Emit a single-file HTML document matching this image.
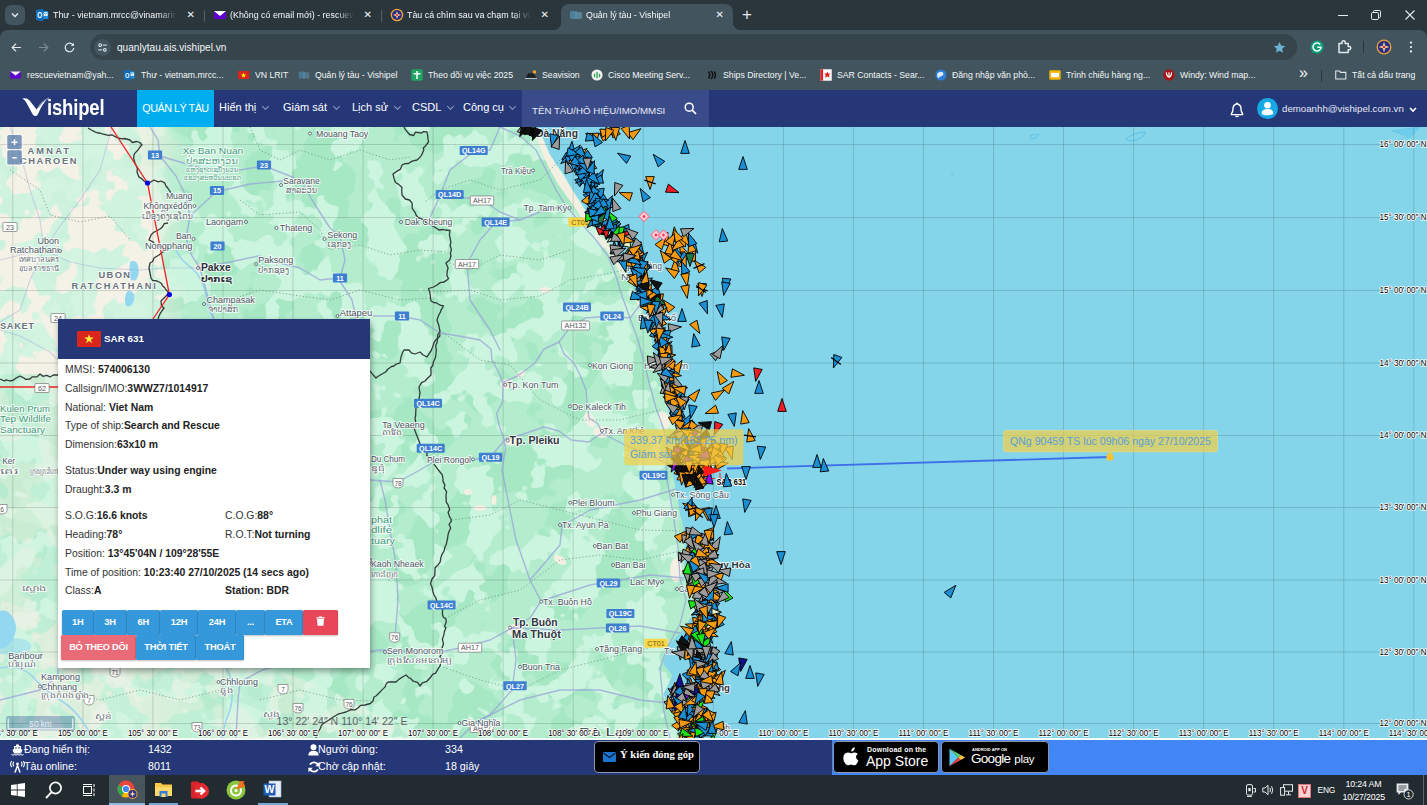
<!DOCTYPE html>
<html lang="vi"><head><meta charset="utf-8"><title>Quản lý tàu - Vishipel</title>
<style>
html,body{margin:0;padding:0;background:#2b363c;}
body{width:1427px;height:805px;overflow:hidden;font-family:"Liberation Sans","DejaVu Sans",sans-serif;}
#root{position:relative;width:1427px;height:805px;overflow:hidden;background:#2b363c;}
.abs{position:absolute;}
#tabstrip{position:absolute;left:0;top:0;width:1427px;height:30px;background:#2b363c;}
#toolbar{position:absolute;left:0;top:30px;width:1427px;height:60px;background:#42545e;}
#nav{position:absolute;left:0;top:90px;width:1427px;height:37px;background:#253777;}
#map{position:absolute;left:0;top:127px;width:1427px;height:611px;overflow:hidden;background:#84d5ea;}
#map svg{position:absolute;left:0;top:0;}
#status{position:absolute;left:0;top:738px;width:1427px;height:37px;background:#253777;}
#taskbar{position:absolute;left:0;top:775px;width:1427px;height:30px;background:#222b30;}
.tsbtn{position:absolute;left:5px;top:5px;width:20px;height:20px;border-radius:6px;background:#42545e;display:flex;align-items:center;justify-content:center;}
.tab{position:absolute;top:4px;height:26px;color:#f4f7f8;font-size:8.9px;white-space:nowrap;}
.tab .fav{position:absolute;left:8px;top:4px;width:14px;height:14px;}
.tab .tt{position:absolute;left:25px;top:6px;overflow:hidden;white-space:nowrap;-webkit-mask-image:linear-gradient(90deg,#000 85%,transparent);mask-image:linear-gradient(90deg,#000 85%,transparent);}
.tab .tx{position:absolute;right:9px;top:5px;font-size:10px;}
.tab.active{background:#42545e;border-radius:8px 8px 0 0;}
.tab.active:before,.tab.active:after{content:"";position:absolute;bottom:0;width:8px;height:8px;background:radial-gradient(circle at 0 0,transparent 8px,#42545e 8.5px);left:-8px;}
.tab.active:after{left:auto;right:-8px;background:radial-gradient(circle at 100% 0,transparent 8px,#42545e 8.5px);}
.tsep{position:absolute;top:10px;width:1px;height:12px;background:#51626b;}
.newtab{position:absolute;left:741px;top:4px;color:#e3e9ec;font-size:17px;line-height:20px;}
.wctl{position:absolute;top:10px;width:10px;height:10px;}
.tbround{position:absolute;left:0;top:0;width:1427px;height:8px;background:#2b363c;}
.tbround:after{content:"";position:absolute;left:0;top:0;width:1427px;height:16px;background:#42545e;border-radius:8px 8px 0 0;}
.omni{position:absolute;left:90px;top:4px;width:1207px;height:26px;border-radius:13px;background:#36444c;}
.omni .site{position:absolute;left:3.5px;top:4.5px;width:17px;height:17px;border-radius:9px;background:#42545e;display:flex;align-items:center;justify-content:center;}
.omni .url{position:absolute;left:27px;top:7.8px;color:#f4f7f8;font-size:10.1px;}
#bookmarks{position:absolute;left:0;top:32px;width:1427px;height:28px;}
.bm{position:absolute;top:3.5px;height:18px;color:#f4f7f8;font-size:8.7px;white-space:nowrap;display:flex;align-items:center;}
.bm svg{flex:none;transform:scale(.88);}
.bm b{font-weight:normal;margin-left:4px;}
.bmmore{position:absolute;left:1299px;top:2px;color:#f0f4f5;font-size:16px;}
#nav{color:#fff;font-size:13px;}
.logo{position:absolute;left:22px;top:8px;width:90px;height:24px;}
.logo span{position:absolute;left:25.2px;top:-2px;font-size:21.5px;line-height:25px;font-weight:bold;color:#fff;transform:scaleX(.86);transform-origin:0 0;white-space:nowrap;letter-spacing:-.2px;}
.navact{position:absolute;left:137px;top:0;width:77px;height:37px;background:#00aeef;line-height:36px;text-align:center;font-size:10.8px;letter-spacing:-.5px;white-space:nowrap;}
.navi{position:absolute;top:0;height:37px;line-height:34px;font-size:11px;white-space:nowrap;}
.navi i{display:inline-block;width:4px;height:4px;border-right:1.6px solid #8f9bc6;border-bottom:1.6px solid #8f9bc6;transform:rotate(45deg);margin-left:6.5px;position:relative;top:-2px;}
.search{position:absolute;left:522px;top:0;width:187px;height:37px;background:#3a4b8a;}
.search span{position:absolute;left:10px;top:14.5px;font-size:9.7px;color:#e8ebf5;white-space:nowrap;}
.search svg{position:absolute;left:162px;top:12px;}
.avatar{position:absolute;left:1257px;top:8px;width:21px;height:21px;}
.email{position:absolute;left:1282px;top:13px;font-size:9.7px;color:#e6e9f3;white-space:nowrap;}
#popup{position:absolute;left:58px;top:319px;width:312px;height:349px;background:#fff;box-shadow:1px 3px 6px rgba(0,0,0,.38);font-size:10.4px;color:#333;}
#popup .ph{position:absolute;left:0;top:0;width:312px;height:40px;background:#253777;color:#fff;}
#popup .ph .flag{position:absolute;left:19px;top:12px;}
#popup .ph b{position:absolute;left:46px;top:14px;font-size:9.9px;}
#popup .r{position:absolute;left:7px;white-space:nowrap;height:16px;line-height:16px;}
#popup .r.c2{left:167px;}
#popup .r b{color:#222;}
#popup .btn{position:absolute;height:25px;line-height:25px;text-align:center;background:#3498db;color:#fff;font-weight:bold;font-size:9.3px;letter-spacing:-.25px;white-space:nowrap;box-shadow:0 1px 2px rgba(0,0,0,.25), inset -1px 0 0 rgba(0,0,0,.06);border-radius:1.5px;}
#popup .btn.red{background:#e8475a;}
#popup .btn.pink{background:#ea6b78;}
#popup .btn svg{position:relative;top:1px;}
#status{color:#fff;}
#status .wline{position:absolute;left:0;top:0;width:1427px;height:1.6px;background:#f4f9fa;}
#status .lightblue{position:absolute;left:832px;top:2px;width:595px;height:35px;background:#4285f4;}
#status .sl{position:absolute;font-size:10.7px;white-space:nowrap;line-height:16px;}
.fb{position:absolute;left:594px;top:3px;width:104px;height:30px;background:#000;border:1px solid #8c94a8;border-radius:4px;box-sizing:content-box;}
.fb svg{position:absolute;left:8px;top:10px;}
.fb span{position:absolute;left:25px;top:7px;font-family:"Liberation Serif","DejaVu Serif",serif;font-weight:bold;font-size:10.6px;color:#fff;white-space:nowrap;}
.badge{position:absolute;top:3px;height:30px;background:#000;border:1px solid #8c94a8;border-radius:4px;}
.badge .b1{position:absolute;left:33px;top:4px;font-size:7px;font-weight:bold;color:#fff;white-space:nowrap;letter-spacing:.2px;}
.badge .b2{position:absolute;left:32px;top:11px;font-size:14px;color:#fff;white-space:nowrap;}
.badge .g1{position:absolute;left:30px;top:5px;font-size:4px;font-weight:bold;color:#fff;white-space:nowrap;}
.badge .g2{position:absolute;left:29px;top:9px;font-size:13.5px;color:#fff;white-space:nowrap;letter-spacing:-.7px;}
.badge .g2 em{font-style:normal;font-size:11.5px;margin-left:4px;letter-spacing:-.3px;}
.tkact{position:absolute;left:109px;top:0;width:36px;height:30px;background:#48555c;}
.tkul{position:absolute;top:28px;height:2px;background:#76a9d8;}
.tkt{position:absolute;color:#fff;font-size:8.9px;white-space:nowrap;letter-spacing:-.2px;}
.wctl svg{display:block;}
.newtab{left:742px !important;top:5px !important;}

</style></head><body>
<div id="root">
<div id="tabstrip">
  <div class="tsbtn"><svg width="10" height="10" viewBox="0 0 10 10"><path d="M2 3.5 L5 6.5 L8 3.5" fill="none" stroke="#e3e9ec" stroke-width="1.4"/></svg></div>
  <div class="tab" style="left:28px;width:176px;"><span class="fav"><svg width="14" height="14" viewBox="0 0 14 14"><rect x="6" y="3" width="6.2" height="8" fill="#1a8fe0"/><path d="M7.4 4.2 H11.6 V7.8 H7.4 Z" fill="#fff"/><path d="M7.4 4.4 L9.5 6.2 L11.6 4.4" fill="none" stroke="#1a8fe0" stroke-width=".8"/><path d="M0 2 L7.4 0.8 V13.2 L0 12 Z" fill="#0f6cbd"/><text x="3.7" y="10.2" font-size="8.5" font-weight="bold" fill="#fff" text-anchor="middle" font-family="Liberation Sans, sans-serif" textLength="5" lengthAdjust="spacingAndGlyphs">O</text></svg></span><span class="tt" style="width:124px">Thư - vietnam.mrcc@vinamarine</span><span class="tx">✕</span></div>
  <div class="tsep" style="left:204px"></div>
  <div class="tab" style="left:205px;width:176px;"><span class="fav"><svg width="14" height="14" viewBox="0 0 14 14"><rect x="1" y="3" width="12" height="8" fill="#5f01d1"/><path d="M1 3 L7 8 L13 3 Z" fill="#fff"/></svg></span><span class="tt" style="width:124px">(Không có email mới) - rescuevietnam</span><span class="tx">✕</span></div>
  <div class="tsep" style="left:381px"></div>
  <div class="tab" style="left:382px;width:176px;"><span class="fav"><svg width="14" height="14" viewBox="0 0 14 14"><circle cx="7" cy="7" r="6.3" fill="#f2a33a"/><circle cx="7" cy="7" r="5" fill="#2a2f86"/><path d="M7 3 L8 6 L11 7 L8 8 L7 11 L6 8 L3 7 L6 6 Z" fill="#f4d9a0"/><circle cx="7" cy="7" r="1" fill="#d22"/></svg></span><span class="tt" style="width:124px">Tàu cá chìm sau va chạm tại vùng</span><span class="tx">✕</span></div>
  <div class="tab active" style="left:561px;width:172px;"><span class="fav"><svg width="14" height="14" viewBox="0 0 14 14"><rect x="1" y="3" width="7" height="8" rx="1" fill="#4d7f9c"/><rect x="6" y="4" width="7" height="7" rx="1" fill="#5d8fa8" opacity=".8"/></svg></span><span class="tt" style="width:120px">Quản lý tàu - Vishipel</span><span class="tx">✕</span></div>
  <div class="newtab">+</div>
  <div class="wctl" style="left:1338px"><svg width="10" height="10"><path d="M0 5.5 H10" stroke="#e3e9ec" stroke-width="1"/></svg></div>
  <div class="wctl" style="left:1371px"><svg width="10" height="10"><rect x="0.5" y="2.5" width="7" height="7" rx="1.2" fill="none" stroke="#e3e9ec"/><path d="M2.5 2.5 V1.5 Q2.5 0.5 3.5 0.5 H8.5 Q9.5 0.5 9.5 1.5 V6.5 Q9.5 7.5 8.5 7.5 H7.5" fill="none" stroke="#e3e9ec"/></svg></div>
  <div class="wctl" style="left:1405px"><svg width="10" height="10"><path d="M0.5 0.5 L9.5 9.5 M9.5 0.5 L0.5 9.5" stroke="#e3e9ec" stroke-width="1.1"/></svg></div>
</div>
<div id="toolbar">
  <div class="tbround"></div>
  <svg class="abs" style="left:10px;top:10.5px" width="13" height="13" viewBox="0 0 16 16"><path d="M13.5 8 H3 M7.5 3.2 L2.7 8 L7.5 12.8" fill="none" stroke="#e3e9ec" stroke-width="1.5"/></svg>
  <svg class="abs" style="left:36.5px;top:10.5px" width="13" height="13" viewBox="0 0 16 16"><path d="M2.5 8 H13 M8.5 3.2 L13.3 8 L8.5 12.8" fill="none" stroke="#7d8c94" stroke-width="1.5"/></svg>
  <svg class="abs" style="left:63px;top:10.5px" width="13" height="13" viewBox="0 0 16 16"><path d="M12.6 5.2 A5.3 5.3 0 1 0 13.3 8.6" fill="none" stroke="#e3e9ec" stroke-width="1.5"/><path d="M13.4 2.2 V6 H9.6 Z" fill="#e3e9ec"/></svg>
  <div class="omni">
    <div class="site"><svg width="11" height="11" viewBox="0 0 14 14"><g stroke="#e3e9ec" stroke-width="1.3" fill="none"><path d="M7.5 4 H12.5"/><circle cx="4" cy="4" r="1.7"/><path d="M1.5 10 H6.5"/><circle cx="10" cy="10" r="1.7"/></g></svg></div>
    <span class="url">quanlytau.ais.vishipel.vn</span>
    <svg class="abs" style="left:1183px;top:6.5px" width="13" height="13" viewBox="0 0 16 16"><path d="M8 1.2 L10.1 5.8 L15 6.3 L11.3 9.6 L12.4 14.5 L8 12 L3.6 14.5 L4.7 9.6 L1 6.3 L5.9 5.8 Z" fill="#6fb3d2"/></svg>
  </div>
  <svg class="abs" style="left:1309px;top:9px" width="16" height="16" viewBox="0 0 16 16"><path d="M8 1.5 A6.5 6.5 0 1 1 3 12.2 L2.6 14.6 L5 13.6" fill="#0f9d78" /><circle cx="8" cy="8" r="6.5" fill="#0f9d78"/><path d="M11.2 5.6 A4 4 0 1 0 12 8.3 H8.4" fill="none" stroke="#fff" stroke-width="1.5"/></svg>
  <svg class="abs" style="left:1336px;top:8px" width="17" height="17" viewBox="0 0 17 17"><path d="M3 5.5 H6 V4.3 A1.6 1.6 0 0 1 9.2 4.3 V5.5 H12.2 V8.5 H13.2 A1.6 1.6 0 0 1 13.2 11.7 H12.2 V14.5 H3 Z" fill="none" stroke="#e3e9ec" stroke-width="1.5" stroke-linejoin="round"/></svg>
  <div class="abs" style="left:1363px;top:11px;width:1px;height:12px;background:#2c373d"></div>
  <svg class="abs" style="left:1376px;top:9px" width="16" height="16" viewBox="0 0 16 16"><circle cx="8" cy="8" r="7.5" fill="#f2a33a"/><circle cx="8" cy="8" r="6.2" fill="#2a2f86"/><path d="M8 2.5 L9.2 6.8 L13.5 8 L9.2 9.2 L8 13.5 L6.8 9.2 L2.5 8 L6.8 6.8 Z" fill="#f4d9a0"/><circle cx="8" cy="8" r="1.3" fill="#d22"/></svg>
  <svg class="abs" style="left:1408px;top:9px" width="6" height="16" viewBox="0 0 6 16"><circle cx="3" cy="3.6" r="1.1" fill="#f0f4f5"/><circle cx="3" cy="8" r="1.1" fill="#f0f4f5"/><circle cx="3" cy="12.4" r="1.1" fill="#f0f4f5"/></svg>
  <div id="bookmarks">
    <span class="bm" style="left:9px"><svg width="14" height="12" viewBox="0 0 14 12"><rect x="0.5" y="2" width="12" height="8" fill="#5f01d1"/><path d="M0.5 2 L6.5 6.5 L12.5 2 Z" fill="#fff"/></svg><b>rescuevietnam@yah...</b></span>
    <span class="bm" style="left:123px"><svg width="14" height="14" viewBox="0 0 14 14"><rect x="6" y="3" width="6.2" height="8" fill="#1a8fe0"/><path d="M7.4 4.2 H11.6 V7.8 H7.4 Z" fill="#fff"/><path d="M7.4 4.4 L9.5 6.2 L11.6 4.4" fill="none" stroke="#1a8fe0" stroke-width=".8"/><path d="M0 2 L7.4 0.8 V13.2 L0 12 Z" fill="#0f6cbd"/><text x="3.7" y="10.2" font-size="8.5" font-weight="bold" fill="#fff" text-anchor="middle" font-family="Liberation Sans, sans-serif" textLength="5" lengthAdjust="spacingAndGlyphs">O</text></svg><b>Thư - vietnam.mrcc...</b></span>
    <span class="bm" style="left:237px"><svg width="14" height="12" viewBox="0 0 14 12"><rect x="0" y="1.5" width="13" height="9" fill="#da251d"/><path d="M6.5 3.3 L7.3 5.5 L9.6 5.5 L7.7 6.9 L8.4 9.1 L6.5 7.7 L4.6 9.1 L5.3 6.9 L3.4 5.5 L5.7 5.5 Z" fill="#ff0"/></svg><b>VN LRIT</b></span>
    <span class="bm" style="left:297px"><svg width="14" height="14" viewBox="0 0 14 14"><rect x="1" y="3" width="7" height="8" rx="1" fill="#4d7f9c" opacity=".8"/><rect x="6" y="4" width="7" height="7" rx="1" fill="#5d8fa8" opacity=".6"/></svg><b>Quản lý tàu - Vishipel</b></span>
    <span class="bm" style="left:410px"><svg width="14" height="14" viewBox="0 0 14 14"><rect x="0.5" y="0.5" width="13" height="13" rx="2" fill="#1fa463"/><path d="M7 2.5 V11.5 M3.2 5.6 H10.8" stroke="#fff" stroke-width="1.7"/></svg><b>Theo dõi vụ việc 2025</b></span>
    <span class="bm" style="left:524px"><svg width="14" height="14" viewBox="0 0 14 14"><path d="M1 10 L4 5 L10 5 L13 10 Z" fill="#1b1f22"/><circle cx="11" cy="3.5" r="2" fill="#f5a623"/><path d="M0 11 H14" stroke="#c7d3d9"/></svg><b>Seavision</b></span>
    <span class="bm" style="left:590px"><svg width="14" height="14" viewBox="0 0 14 14"><circle cx="7" cy="7" r="6.3" fill="#f3f3f3"/><path d="M4.2 9 V6 M7 10 V4 M9.8 9 V6" stroke="#3aa655" stroke-width="1.6" stroke-linecap="round"/></svg><b>Cisco Meeting Serv...</b></span>
    <span class="bm" style="left:705px"><svg width="14" height="14" viewBox="0 0 14 14"><path d="M3 3 Q6 7 3 11 M6 2.5 Q10 7 6 11.5 M9.5 3 Q12.5 7 9.5 11" fill="none" stroke="#111" stroke-width="1.7"/></svg><b>Ships Directory | Ve...</b></span>
    <span class="bm" style="left:819px"><svg width="14" height="14" viewBox="0 0 14 14"><rect x="0.5" y="0.5" width="13" height="13" fill="#fff"/><rect x="0.5" y="0.5" width="3.2" height="13" fill="#d8232a"/><path d="M8.5 3 L9.6 5.4 L12 5.2 L10.4 7.4 L11 10 L8.5 8.8 L6 10 L6.6 7.4 L5 5.2 L7.4 5.4 Z" fill="#d8232a"/></svg><b>SAR Contacts - Sear...</b></span>
    <span class="bm" style="left:934px"><svg width="14" height="14" viewBox="0 0 14 14"><circle cx="7" cy="7" r="6.3" fill="#2e7bd6"/><path d="M3 5 Q6 2 9 4 Q11 7 8 8 Q5 8 4 11 Q1.5 8 3 5Z" fill="#d9ecff"/></svg><b>Đăng nhập văn phò...</b></span>
    <span class="bm" style="left:1048px"><svg width="14" height="14" viewBox="0 0 14 14"><rect x="0.5" y="1.5" width="13" height="11" rx="1.5" fill="#f4b400"/><rect x="2.5" y="4.5" width="9" height="5" fill="#fff"/></svg><b>Trình chiếu hàng ng...</b></span>
    <span class="bm" style="left:1162px"><svg width="14" height="14" viewBox="0 0 14 14"><circle cx="7" cy="7" r="6.5" fill="#a4161a"/><path d="M4 4 Q4.5 9 7 9.5 Q9.5 9 10 4 M7 4 V9" fill="none" stroke="#fff" stroke-width="1.3"/></svg><b>Windy: Wind map...</b></span>
    <span class="bmmore">»</span>
    <div class="abs" style="left:1321px;top:8px;width:1px;height:12px;background:#2c373d"></div>
    <span class="bm" style="left:1334px"><svg width="14" height="12" viewBox="0 0 14 12"><path d="M1 1.5 H5.2 L6.6 3 H12.5 V10.5 H1 Z" fill="none" stroke="#e3e9ec" stroke-width="1.2"/></svg><b style="margin-left:4px">Tất cả dấu trang</b></span>
  </div>
</div>

<div id="nav">
  <div class="logo"><svg width="30" height="21" viewBox="0 0 30 21" style="position:absolute;left:0;top:-1px"><path d="M0.3 1.6 Q4.5 0.2 7.6 3.4 L14.6 12.6 Q19 3.5 27.8 0.3 Q21.5 5.2 18.6 11.4 L15.8 17.4 Q14.6 19.2 13.2 19 Q11.6 19 10.6 17.2 L4.6 6 Q3 2.8 0.3 1.6 Z" fill="#fff"/><path d="M16.4 10.6 Q19.6 4.6 25.4 1.8" fill="none" stroke="#253777" stroke-width=".7"/></svg><span>ishipel</span></div>
  <div class="navact">QUẢN LÝ TÀU</div>
  <div class="navi" style="left:219px">Hiển thị<i></i></div>
  <div class="navi" style="left:283px">Giám sát<i></i></div>
  <div class="navi" style="left:352px">Lịch sử<i></i></div>
  <div class="navi" style="left:412px">CSDL<i></i></div>
  <div class="navi" style="left:463px">Công cụ<i></i></div>
  <div class="search"><span>TÊN TÀU/HÔ HIỆU/IMO/MMSI</span><svg width="13" height="13" viewBox="0 0 13 13"><circle cx="5.2" cy="5.2" r="4" fill="none" stroke="#fff" stroke-width="1.5"/><path d="M8.2 8.2 L12 12" stroke="#fff" stroke-width="1.7"/></svg></div>
  <svg class="abs" style="left:1230px;top:12px" width="14" height="16" viewBox="0 0 14 16"><path d="M7 1.2 Q7.9 1.2 7.9 2.2 Q11 3 11 6.8 Q11 10.2 12.6 11.8 V12.6 H1.4 V11.8 Q3 10.2 3 6.8 Q3 3 6.1 2.2 Q6.1 1.2 7 1.2 Z" fill="none" stroke="#fff" stroke-width="1.4"/><path d="M5.4 13.8 Q7 15.6 8.6 13.8" fill="none" stroke="#fff" stroke-width="1.3"/></svg>
  <div class="avatar"><svg width="21" height="21" viewBox="0 0 21 21"><circle cx="10.5" cy="10.5" r="10.5" fill="#17a8e6"/><circle cx="10.5" cy="7.3" r="3.3" fill="#fff"/><path d="M4.8 15.2 Q4.8 11 10.5 11 Q16.2 11 16.2 15.2 Q16.2 17.2 10.5 17.2 Q4.8 17.2 4.8 15.2 Z" fill="#fff"/></svg></div>
  <div class="email">demoanhh@vishipel.com.vn</div>
  <svg class="abs" style="left:1409px;top:17px" width="8" height="6" viewBox="0 0 8 6"><path d="M1 1 L4 4 L7 1" fill="none" stroke="#fff" stroke-width="1.7"/></svg>
</div>

<div id="map">
<svg width="1427" height="611" viewBox="0 127 1427 611" font-family="Liberation Sans, DejaVu Sans, sans-serif">
<rect x="0" y="127" width="1427" height="611" fill="#84d5ea"/>
<path d="M0 127 L527 127 L535 131 L541 134 L545 143 L549 153 L556 164 L563 174 L570 185 L576 195 L583 206 L589 216 L593 226 L600 233 L606 238 L612 244 L618 250 L622 260 L627 271 L631 281 L635 292 L641 305 L646 318 L649 328 L652 343 L655 359 L658 372 L661 386 L665 400 L670 416 L675 428 L678 436 L676 450 L672 462 L672 472 L676 489 L678 500 L680 514 L684 531 L685 550 L684 578 L693 585 L697 600 L693 614 L686 625 L680 633 L670 643 L665 655 L663 664 L672 675 L668 685 L663 694 L668 703 L672 711 L674 720 L676 728 L680 738 L0 738 Z" fill="#b3edce"/>
<defs>
<clipPath id="landclip"><path d="M0 127 L527 127 L535 131 L541 134 L545 143 L549 153 L556 164 L563 174 L570 185 L576 195 L583 206 L589 216 L593 226 L600 233 L606 238 L612 244 L618 250 L622 260 L627 271 L631 281 L635 292 L641 305 L646 318 L649 328 L652 343 L655 359 L658 372 L661 386 L665 400 L670 416 L675 428 L678 436 L676 450 L672 462 L672 472 L676 489 L678 500 L680 514 L684 531 L685 550 L684 578 L693 585 L697 600 L693 614 L686 625 L680 633 L670 643 L665 655 L663 664 L672 675 L668 685 L663 694 L668 703 L672 711 L674 720 L676 728 L680 738 L0 738 Z"/></clipPath>
<filter id="fL" x="0" y="0" width="1" height="1" color-interpolation-filters="sRGB">
  <feTurbulence type="fractalNoise" baseFrequency="0.03" numOctaves="3" seed="4"/>
  <feColorMatrix type="matrix" values="0 0 0 0 0.795  0 0 0 0 0.96  0 0 0 0 0.87  40 0 0 0 -21.2"/>
</filter>
<filter id="fD" x="0" y="0" width="1" height="1" color-interpolation-filters="sRGB">
  <feTurbulence type="fractalNoise" baseFrequency="0.02" numOctaves="3" seed="11"/>
  <feColorMatrix type="matrix" values="0 0 0 0 0.65  0 0 0 0 0.905  0 0 0 0 0.77  0 40 0 0 -20.9"/>
</filter>
<filter id="fC" x="0" y="0" width="1" height="1" color-interpolation-filters="sRGB">
  <feTurbulence type="fractalNoise" baseFrequency="0.028" numOctaves="3" seed="23"/>
  <feColorMatrix type="matrix" values="0 0 0 0 0.955  0 0 0 0 0.945  0 0 0 0 0.9  0 0 40 0 -19.4"/>
</filter>
<linearGradient id="wg" x1="0" x2="1" y1="0" y2="0"><stop offset="0" stop-color="#fff"/><stop offset="0.09" stop-color="#fff"/><stop offset="0.135" stop-color="#000"/></linearGradient>
<mask id="westmask" maskUnits="userSpaceOnUse" x="0" y="127" width="1427" height="611"><rect x="0" y="127" width="1427" height="611" fill="url(#wg)"/><path d="M0 127 H120 L150 185 L168 295 L150 330 L60 360 L0 380 Z" fill="#fff"/><rect x="0" y="374" width="300" height="364" fill="#000" opacity=".55"/><path d="M0 600 L60 620 L200 640 L330 690 L420 738 L0 738 Z" fill="#fff" opacity=".45"/></mask>
</defs>
<g clip-path="url(#landclip)">
  <rect x="0" y="127" width="760" height="611" filter="url(#fD)"/>
  <rect x="0" y="127" width="760" height="611" filter="url(#fL)"/>
  <g fill="#f3efe3">
    <path d="M541 136 L548 150 L556 165 L566 180 L576 196 L586 212 L592 226 L586 226 L578 212 L568 198 L558 184 L549 168 L542 152 L537 140 Z"/>
    <path d="M596 232 L612 246 L620 258 L628 276 L622 278 L614 262 L606 250 L594 238 Z" opacity=".8"/>
    <ellipse cx="507" cy="384" rx="7" ry="5"/><ellipse cx="521" cy="374" rx="5" ry="3" transform="rotate(-35 521 374)"/>
    <ellipse cx="512" cy="441" rx="8" ry="4.5"/>
    <ellipse cx="602" cy="432" rx="9" ry="6"/><ellipse cx="590" cy="420" rx="5" ry="8" transform="rotate(-30 590 420)"/>
    <ellipse cx="515" cy="630" rx="9" ry="6"/>
    <ellipse cx="676" cy="570" rx="6" ry="12"/>
    <ellipse cx="640" cy="300" rx="4" ry="10" transform="rotate(-20 640 300)"/>
    <ellipse cx="664" cy="420" rx="5" ry="9" transform="rotate(-20 664 420)"/>
    <ellipse cx="200" cy="268" rx="7" ry="4"/>
    <ellipse cx="468" cy="492" rx="4" ry="3"/><ellipse cx="480" cy="508" rx="6" ry="3"/><ellipse cx="494" cy="500" rx="2.5" ry="5"/>
    <ellipse cx="545" cy="290" rx="6" ry="3"/><ellipse cx="560" cy="560" rx="7" ry="4" transform="rotate(30 560 560)"/>
  </g>
  <g mask="url(#westmask)">
    <rect x="0" y="127" width="760" height="611" fill="#d6f4e2" opacity=".8"/>
    <rect x="0" y="127" width="760" height="611" filter="url(#fC)"/>
  </g>
</g>

<g fill="#6fcdec" stroke="#5fc3e6" stroke-width=".6"><path d="M1392 131 L1420 127 L1414 134 L1408 138 L1404 135 Z"/><path d="M1126 139 Q1130 134 1145 132 Q1146 136 1136 140 Q1128 142 1126 139Z" fill="none" stroke-width="1"/><path d="M1030 136 Q1034 133 1039 135 Q1036 139 1031 139Z" fill="none" stroke-width="1"/><path d="M951 175 l2 -1.5 l.5 1 z"/></g>
<path d="M12.8 127V738M82.9 127V738M152.9 127V738M223.0 127V738M293.0 127V738M363.1 127V738M433.1 127V738M503.1 127V738M573.2 127V738M643.2 127V738M713.3 127V738M783.4 127V738M853.4 127V738M923.4 127V738M993.5 127V738M1063.5 127V738M1133.6 127V738M1203.7 127V738M1273.7 127V738M1343.8 127V738M1413.8 127V738M0 144.5H1427M0 217.5H1427M0 290.5H1427M0 363H1427M0 435.5H1427M0 507.5H1427M0 580H1427M0 652H1427M0 723.5H1427" stroke="#000" stroke-opacity=".14" stroke-width="1" fill="none"/>
<g fill="#93d8f0" stroke="none">
<path d="M0 611 Q7 609 12 616 Q18 624 15 634 Q12 644 4 648 L0 649 Z"/><path d="M0 640 Q14 636 26 640 Q34 644 30 650 Q16 656 0 654 Z" opacity=".55"/>
<path d="M130 262 q6 -3 8 4 q2 8 -2 14 q-5 2 -7 -4 z"/><path d="M128 290 q8 2 6 10 q-2 8 -8 6 q-3 -8 2 -16z"/>
</g>
<g fill="none" stroke="#9ad4ee" stroke-width="1.6" stroke-linecap="round">
<path d="M176 250 Q182 262 192 268 Q204 280 206 296 Q208 310 214 320"/>
<path d="M0 668 Q20 664 32 676 Q44 690 60 700 Q80 712 92 738"/>
<path d="M214 640 Q222 660 230 676 Q236 700 226 720 L222 738"/>
</g>
<g fill="none" stroke="#98a3d8" stroke-opacity=".75" stroke-width="1.4" stroke-linejoin="round" stroke-linecap="round">
<path d="M150 127 L158 140 L160 156 L176 176 L186 196 L190 216 L186 238 L192 256 L200 268 L206 290 L214 320"/>
<path d="M200 268 L230 262 L258 256 L276 262 L300 268 L320 280 L338 278 L352 300 L356 318"/>
<path d="M160 156 L200 168 L240 170 L264 166 L290 176 L302 182"/>
<path d="M190 216 L216 192 L250 184 L283 181"/>
<path d="M302 182 L312 200 L330 228 L340 236 L345 260 L340 278"/>
<path d="M0 330 L20 336 L50 352 L58 360" stroke-opacity=".4" stroke-width="1.1"/>
<path d="M0 260 L20 255 L44 250 L70 262 L100 268 L140 270 L165 268 L200 268" stroke-opacity=".4" stroke-width="1.1"/>
<path d="M44 250 L40 220 L30 190 L22 160 L10 127" stroke-opacity=".4" stroke-width="1.1"/>
<path d="M44 250 L60 226 L80 200 L100 170 L112 127" stroke-opacity=".4" stroke-width="1.1"/>
<path d="M44 250 L30 280 L20 310 L0 322" stroke-opacity=".4" stroke-width="1.1"/>
<path d="M370 316 L400 316 L420 320 L440 333 L459 336 L480 340 L491 349 L492 360 L500 375 L503 384"/>
<path d="M504 382 L517.5 376 L535 363 L544 349 L559 342 L568 330 L585 318 L612 316 L630 318 L640 305"/>
<path d="M559 342 L564 354 L574 363 L580 375 L586 390 L587.5 407.5 L589 418 L598 424 L602 433"/>
<path d="M503 384 L502.6 401.5 L496.6 413.5 L499.6 427 L504 439 L505.6 449 L502 470 L508 500 L516 540 L530 580 L541 601 L530 618 L512 628"/>
<path d="M505.6 439 L523.5 434 L544 427 L559 431 L571 440 L589 442 L602 433 L625 445 L650 455 L672 466"/>
<path d="M505 440 L490 457 L470 460 L440 458"/>
<path d="M512 628 L560 630 L600 628 L640 626 L680 633"/>
<path d="M512 628 L516 660 L512 690 L490 715 L476 722 L460 738"/>
<path d="M512 628 L490 640 L460 648 L440 652"/>
<path d="M476 722 L520 700 L560 690 L600 690 L640 700 L668 703"/>
<path d="M541 601 L590 585 L620 580 L650 575 L684 578"/>
<path d="M530 580 L560 545 L562 526 L590 510 L640 500 L676 489"/>
<path d="M500 127 L520 136 L536 150 L546 170 L556 190 L566 206 L580 222 L596 240 L608 256 L616 276 L622 296 L630 318 L638 340 L644 362 L650 386 L656 408 L664 430 L668 452 L666 474 L670 496 L674 520 L678 548 L680 578 L686 600 L680 624 L668 646 L660 668 L662 690 L664 712 L670 738"/>
<path d="M500 127 L490 150 L473 152 L450 170 L440 196 L428 222"/>
<path d="M450 196 L482 200 L500 212 L520 220 L545 210 L566 206"/>
<path d="M467 264 L480 240 L496 222 L520 220"/>
<path d="M467 264 L470 300 L490 330 L500 350"/>
<path d="M236 738 L238 700 L240 682 L262 670 L300 660 L340 655 L380 650 L415 651"/>
<path d="M0 700 L40 690 L58 676 L58 668"/>
<path d="M370 480 L398 482 L420 470 L440 458"/>
<path d="M395 637 L398 600 L396 564 L390 530 L385 500 L380 480"/>
</g>
<g fill="none" stroke="#6b8c7a" stroke-width="0.9" stroke-dasharray="1.2 2.2" stroke-opacity=".85">
<path d="M10 170 L40 190 L50 215 L80 222 L110 216 L130 240"/>
<path d="M250 127 L260 150 L280 160 L300 150 L330 160 L360 150 L390 160 L410 157"/>
<path d="M240 200 L260 215 L300 212 L320 230 L330 250 L360 245 L390 255 L420 250 L447 252"/>
<path d="M230 300 L260 290 L300 296 L330 300 L360 290 L400 300 L431 298"/>
<path d="M430 292 L470 290 L500 300 L540 296 L570 280 L600 275 L625 270"/>
<path d="M440 330 L480 360 L510 365 L540 400 L580 420 L620 420 L660 410"/>
<path d="M452 520 L490 515 L520 500 L560 510 L600 520 L640 530 L684 531"/>
<path d="M445 618 L480 600 L520 590 L560 560 L600 555 L640 560 L685 550"/>
<path d="M440 666 L480 680 L520 690 L560 670 L600 660 L640 650 L670 643"/>
<path d="M560 160 L540 180 L500 190 L470 180 L440 190 L425 202"/>
<path d="M570 250 L540 260 L500 255 L470 270 L447 262"/>
<path d="M60 690 L100 700 L140 690 L180 700 L220 690"/>
<path d="M260 700 L300 690 L340 700 L372 701"/>
</g>
<g fill="none" stroke="#333a3a" stroke-width="1.3" stroke-linejoin="round">
<path d="M88 128 L91.4 130.0 L94.9 131.8 L97.7 133.0 L100.0 133.0 L102.2 133.9 L108.5 135.4 L112.0 134.8 L114.3 136.2 L118.0 138.0 L122.1 138.9 L124.5 138.5 L130.0 140.0 L132.3 142.5 L136.8 141.5 L139.9 142.7 L142.0 145.0 L140.4 146.4 L138.0 150.0 L134.5 153.6 L134.0 155.0 L133.6 158.1 L135.0 163.0 L137.4 168.6 L137.0 172.0 L138.9 176.9 L142.0 179.0 L144.6 181.5 L147.0 183.0 L149.6 182.8 L154.0 180.0 L158.1 181.9 L161.0 181.0 L164.7 182.9 L166.0 186.0 L168.1 188.5 L171.0 193.0"/>
<path d="M168 223 L164.3 223.7 L162.1 227.3 L160.0 229.0 L155.5 231.5 L153.5 232.4 L151.0 235.0 L149.0 240.0 L153.0 241.9 L154.4 243.9 L158.0 246.0 L162.1 247.2 L165.0 251.0 L163.4 251.6 L159.0 255.0 L154.0 258.0 L152.7 261.5 L150.0 263.0 L149.0 268.0 L150.0 273.0 L151.0 278.0 L152.6 280.4 L157.0 281.0 L161.0 283.0 L162.6 285.7 L165.0 288.0 L165.5 289.1 L169.0 293.0 L165.0 297.0 L161.0 301.0 L161.5 305.9 L164.0 308.0 L160.6 312.8 L159.0 316.0 L158.0 319.0"/>
<path d="M0 379 L4.6 381.0 L6.2 379.9 L10.0 381.0 L13.4 380.2 L15.5 378.4 L20.0 376.0 L24.2 378.1 L25.3 379.3 L30.0 379.0 L32.1 376.9 L37.0 376.9 L40.0 374.0 L42.9 376.3 L46.8 375.4 L50.0 377.0 L53.5 375.0 L58.0 375.0"/>
<path d="M404 127 L405.5 129.7 L409.5 134.5 L413.6 135.5 L415.5 132.1 L421.5 133.1 L423.2 131.7 L427.0 132.0 L427.8 136.3 L427.9 138.4 L428.5 142.0 L425.3 146.2 L423.3 148.0 L423.8 149.9 L421.5 155.3 L419.3 157.9 L417.0 160.0 L412.1 161.1 L408.4 163.5 L405.1 163.6 L402.0 165.0 L400.5 169.1 L397.4 170.9 L393.0 174.0 L394.2 178.9 L395.5 182.5 L398.7 184.4 L402.0 187.5 L401.7 190.2 L402.0 195.0 L405.4 199.0 L409.5 200.0 L412.2 203.4 L412.1 205.5 L412.2 208.3 L415.5 213.1 L416.0 215.0 L418.4 217.7 L422.5 219.3 L425.1 221.4 L427.0 223.0 L429.6 224.2 L434.0 226.7 L436.0 228.0 L438.9 230.0 L443.4 229.5 L445.0 230.0 L450.0 230.5 L449.4 234.7 L450.2 238.7 L450.9 242.3 L450.1 245.5 L451.4 249.7 L450.4 253.4 L451.0 256.0 L449.6 260.1 L446.0 263.0 L448.1 268.2 L447.3 270.8 L446.9 275.6 L448.5 278.5 L446.9 280.1 L443.3 282.4 L440.6 282.4 L437.0 285.0 L433.6 287.0 L428.5 288.5 L429.8 292.4 L430.5 297.7 L431.0 301.0 L434.5 302.9 L435.8 302.5 L440.2 305.2 L443.5 306.0 L441.0 310.1 L440.6 311.6 L438.5 315.7 L437.0 320.0 L439.0 326.0 L440.0 332.0 L437.7 334.6 L437.5 338.4 L437.0 343.0 L435.7 345.3 L436.2 350.0 L436.0 354.0 L435.3 357.9 L433.2 362.5 L433.0 365.0 L430.8 368.0 L431.0 371.4 L431.0 375.0 L426.8 379.0 L425.0 381.0 L421.6 382.6 L419.0 387.0 L420.0 393.0 L419.0 399.0 L417.8 402.3 L416.0 408.0 L415.8 410.9 L415.6 416.0 L415.0 418.0 L415.6 421.1 L415.3 425.1 L414.0 428.0 L415.1 430.9 L417.0 436.0 L418.8 440.2 L420.0 444.0 L423.4 448.2 L424.3 449.2 L427.2 450.9 L426.8 455.4 L430.0 458.0 L432.3 459.7 L434.4 464.8 L435.6 466.2 L437.2 468.6 L440.0 472.0 L442.3 474.9 L443.1 479.8 L442.9 481.1 L444.9 485.1 L444.0 487.9 L446.6 491.7 L446.0 495.0 L446.1 498.4 L446.3 502.2 L448.0 504.7 L449.7 509.7 L448.1 512.2 L449.6 516.9 L451.0 519.0 L451.2 521.4 L449.1 524.4 L450.7 528.0 L448.9 531.7 L448.0 535.0 L447.6 538.5 L447.1 540.3 L446.4 544.0 L444.9 547.3 L444.0 551.0 L441.9 554.6 L440.9 557.6 L440.2 561.8 L438.0 565.0 L435.1 567.8 L434.9 573.2 L434.7 575.6 L432.0 579.0 L430.5 583.8 L432.0 587.0 L432.8 591.2 L434.0 595.0 L436.1 598.4 L436.9 602.2 L438.2 603.7 L440.0 607.0 L442.6 609.1 L442.4 614.0 L443.2 617.0 L446.0 619.0 L446.2 622.1 L444.5 626.4 L445.9 627.8 L444.2 632.3 L443.9 634.9 L442.4 639.0 L443.0 642.0 L443.5 644.1 L441.3 649.8 L442.6 652.8 L439.9 656.4 L442.3 660.6 L441.0 661.2 L440.0 666.0 L438.5 668.2 L435.4 673.4 L433.1 673.9 L430.0 678.0 L426.9 681.3 L423.9 682.3 L422.2 683.0 L420.0 686.0 L417.6 682.4 L413.2 681.2 L410.3 678.1 L409.0 677.9 L406.0 675.0 L403.8 676.2 L399.1 679.1 L396.0 682.0 L392.3 682.0 L388.0 682.0"/>
<path d="M440 334 L439.6 336.6 L435.2 340.6 L433.7 343.4 L433.0 346.0 L431.0 350.9 L429.2 353.7 L427.0 357.0 L422.8 354.7 L420.0 352.0 L415.0 354.0 L411.3 352.8 L409.0 350.0 L404.0 350.0 L402.6 352.4 L401.0 357.0 L400.0 363.0 L396.2 364.1 L394.0 366.0 L391.7 366.5 L388.0 369.0 L385.6 372.0 L382.0 374.0 L377.8 376.5 L376.0 378.0 L371.8 373.4 L370.0 371.0"/>
<path d="M388 682 L386.3 683.7 L385.1 686.9 L381.5 690.4 L380.0 692.0 L376.3 695.7 L374.0 697.0 L373.0 701.0 L370.4 703.5 L365.0 705.0 L360.7 705.3 L358.0 708.0 L355.4 709.8 L351.0 709.6 L346.0 712.0 L342.7 712.9 L337.9 714.2 L335.0 716.0 L332.3 717.5 L329.0 720.0 L324.0 723.0 L321.7 724.9 L320.0 729.0 L317.0 734.0 L316.0 738.0"/>
</g>
<path d="M111 127 L147.5 183 L169.4 294.6 L153 319" fill="none" stroke="#ee2222" stroke-width="1.3"/>
<path d="M0 387 H58" fill="none" stroke="#ee2222" stroke-width="1.3"/>
<circle cx="147.5" cy="183" r="2.6" fill="#0000e0"/><circle cx="169.4" cy="294.6" r="2.6" fill="#0000e0"/>
<rect x="147.9" y="150.5" width="14.2" height="9" rx="1" fill="#3f7fd0"/><text x="155" y="157.7" font-size="7.2" font-weight="bold" fill="#fff" text-anchor="middle">13</text>
<rect x="256.9" y="160.5" width="14.2" height="9" rx="1" fill="#3f7fd0"/><text x="264" y="167.7" font-size="7.2" font-weight="bold" fill="#fff" text-anchor="middle">23</text>
<rect x="209.9" y="186.0" width="14.2" height="9" rx="1" fill="#3f7fd0"/><text x="217" y="193.2" font-size="7.2" font-weight="bold" fill="#fff" text-anchor="middle">15</text>
<rect x="210.4" y="241.5" width="14.2" height="9" rx="1" fill="#3f7fd0"/><text x="217.5" y="248.7" font-size="7.2" font-weight="bold" fill="#fff" text-anchor="middle">20</text>
<rect x="332.9" y="273.5" width="14.2" height="9" rx="1" fill="#3f7fd0"/><text x="340" y="280.7" font-size="7.2" font-weight="bold" fill="#fff" text-anchor="middle">11</text>
<rect x="394.9" y="311.5" width="14.2" height="9" rx="1" fill="#3f7fd0"/><text x="402" y="318.7" font-size="7.2" font-weight="bold" fill="#fff" text-anchor="middle">11</text>
<rect x="459.7" y="146.0" width="28.0" height="9" rx="1" fill="#3f7fd0"/><text x="473.7" y="153.2" font-size="7.2" font-weight="bold" fill="#fff" text-anchor="middle">QL14G</text>
<rect x="435.7" y="190.0" width="28.0" height="9" rx="1" fill="#3f7fd0"/><text x="449.7" y="197.2" font-size="7.2" font-weight="bold" fill="#fff" text-anchor="middle">QL14D</text>
<rect x="470.3" y="196.0" width="23.4" height="9" rx="1" fill="#fff" stroke="#777" stroke-width=".7"/><text x="482" y="203.2" font-size="7.2" fill="#555" text-anchor="middle">AH17</text>
<rect x="481.6" y="217.5" width="28.0" height="9" rx="1" fill="#3f7fd0"/><text x="495.6" y="224.7" font-size="7.2" font-weight="bold" fill="#fff" text-anchor="middle">QL14E</text>
<rect x="455.3" y="259.5" width="23.4" height="9" rx="1" fill="#fff" stroke="#777" stroke-width=".7"/><text x="467" y="266.7" font-size="7.2" fill="#555" text-anchor="middle">AH17</text>
<rect x="563.0" y="302.5" width="28.0" height="9" rx="1" fill="#3f7fd0"/><text x="577" y="309.7" font-size="7.2" font-weight="bold" fill="#fff" text-anchor="middle">QL24B</text>
<rect x="600.3" y="311.5" width="23.4" height="9" rx="1" fill="#3f7fd0"/><text x="612" y="318.7" font-size="7.2" font-weight="bold" fill="#fff" text-anchor="middle">QL24</text>
<rect x="561.6" y="321.0" width="28.0" height="9" rx="1" fill="#fff" stroke="#777" stroke-width=".7"/><text x="575.6" y="328.2" font-size="7.2" fill="#555" text-anchor="middle">AH132</text>
<rect x="414.0" y="398.8" width="28.0" height="9" rx="1" fill="#3f7fd0"/><text x="428" y="406.0" font-size="7.2" font-weight="bold" fill="#fff" text-anchor="middle">QL14C</text>
<rect x="416.7" y="443.8" width="28.0" height="9" rx="1" fill="#3f7fd0"/><text x="430.7" y="451.0" font-size="7.2" font-weight="bold" fill="#fff" text-anchor="middle">QL14C</text>
<rect x="478.9" y="452.8" width="23.4" height="9" rx="1" fill="#3f7fd0"/><text x="490.6" y="460.0" font-size="7.2" font-weight="bold" fill="#fff" text-anchor="middle">QL19</text>
<rect x="639.5" y="470.8" width="28.0" height="9" rx="1" fill="#3f7fd0"/><text x="653.5" y="478.0" font-size="7.2" font-weight="bold" fill="#fff" text-anchor="middle">QL19C</text>
<rect x="568.3" y="217.5" width="23.4" height="9" rx="1" fill="#f8d64a"/><text x="580" y="224.7" font-size="7.2" fill="#7a5a00" text-anchor="middle">CT01</text>
<path d="M393 478.5 H403 V484 Q403 487.5 398 488 Q393 487.5 393 484 Z" fill="#fff" stroke="#777" stroke-width=".7"/><text x="398" y="485.5" font-size="6.5" fill="#555" text-anchor="middle">78</text>
<rect x="427.6" y="600.5" width="28.0" height="9" rx="1" fill="#3f7fd0"/><text x="441.6" y="607.7" font-size="7.2" font-weight="bold" fill="#fff" text-anchor="middle">QL14C</text>
<rect x="596.8" y="578.5" width="23.4" height="9" rx="1" fill="#3f7fd0"/><text x="608.5" y="585.7" font-size="7.2" font-weight="bold" fill="#fff" text-anchor="middle">QL29</text>
<rect x="606.4" y="609.0" width="28.0" height="9" rx="1" fill="#3f7fd0"/><text x="620.4" y="616.2" font-size="7.2" font-weight="bold" fill="#fff" text-anchor="middle">QL19C</text>
<rect x="605.9" y="623.5" width="23.4" height="9" rx="1" fill="#3f7fd0"/><text x="617.6" y="630.7" font-size="7.2" font-weight="bold" fill="#fff" text-anchor="middle">QL26</text>
<rect x="644.3" y="638.8" width="23.4" height="9" rx="1" fill="#f8d64a"/><text x="656" y="646.0" font-size="7.2" fill="#7a5a00" text-anchor="middle">CT01</text>
<rect x="458.3" y="643.2" width="23.4" height="9" rx="1" fill="#fff" stroke="#777" stroke-width=".7"/><text x="470" y="650.4" font-size="7.2" fill="#555" text-anchor="middle">AH17</text>
<rect x="503.3" y="681.3" width="23.4" height="9" rx="1" fill="#3f7fd0"/><text x="515" y="688.5" font-size="7.2" font-weight="bold" fill="#fff" text-anchor="middle">QL27</text>
<path d="M389.7 632.8 H399.7 V638.3 Q399.7 641.8 394.7 642.3 Q389.7 641.8 389.7 638.3 Z" fill="#fff" stroke="#777" stroke-width=".7"/><text x="394.7" y="639.8" font-size="6.5" fill="#555" text-anchor="middle">76</text>
<rect x="2.9" y="222.5" width="14.2" height="9" rx="1" fill="#fff" stroke="#777" stroke-width=".7"/><text x="10" y="229.7" font-size="7.2" fill="#555" text-anchor="middle">23</text>
<rect x="50.9" y="313.5" width="14.2" height="9" rx="1" fill="#fff" stroke="#777" stroke-width=".7"/><text x="58" y="320.7" font-size="7.2" fill="#555" text-anchor="middle">24</text>
<rect x="34.9" y="383.5" width="14.2" height="9" rx="1" fill="#fff" stroke="#777" stroke-width=".7"/><text x="42" y="390.7" font-size="7.2" fill="#555" text-anchor="middle">62</text>
<path d="M-3 504.5 H7 V510 Q7 513.5 2 514 Q-3 513.5 -3 510 Z" fill="#fff" stroke="#777" stroke-width=".7"/><text x="2" y="511.5" font-size="6.5" fill="#555" text-anchor="middle">6</text>
<path d="M84 695.5 H94 V701 Q94 704.5 89 705 Q84 704.5 84 701 Z" fill="#fff" stroke="#777" stroke-width=".7"/><text x="89" y="702.5" font-size="6.5" fill="#555" text-anchor="middle">7</text>
<path d="M278 684.5 H288 V690 Q288 693.5 283 694 Q278 693.5 278 690 Z" fill="#fff" stroke="#777" stroke-width=".7"/><text x="283" y="691.5" font-size="6.5" fill="#555" text-anchor="middle">7</text>
<path d="M293 703.5 H303 V709 Q303 712.5 298 713 Q293 712.5 293 709 Z" fill="#fff" stroke="#777" stroke-width=".7"/><text x="298" y="710.5" font-size="6.5" fill="#555" text-anchor="middle">76</text>
<path d="M344 699.5 H354 V705 Q354 708.5 349 709 Q344 708.5 344 705 Z" fill="#fff" stroke="#777" stroke-width=".7"/><text x="349" y="706.5" font-size="6.5" fill="#555" text-anchor="middle">76</text>
<path d="M192 722.5 H202 V728 Q202 731.5 197 732 Q192 731.5 192 728 Z" fill="#fff" stroke="#777" stroke-width=".7"/><text x="197" y="729.5" font-size="6.5" fill="#555" text-anchor="middle">73</text>
<path d="M110 667.5 H120 V673 Q120 676.5 115 677 Q110 676.5 110 673 Z" fill="#fff" stroke="#777" stroke-width=".7"/><text x="115" y="674.5" font-size="6.5" fill="#555" text-anchor="middle">71</text>
<rect x="470.3" y="723.5" width="23.4" height="9" rx="1" fill="#fff" stroke="#777" stroke-width=".7"/><text x="482" y="730.7" font-size="7.2" fill="#555" text-anchor="middle">AH17</text>
<g paint-order="stroke" stroke="#fff" stroke-width="1.8" stroke-linejoin="round" stroke-opacity=".85">
<text x="316" y="136.7" font-size="8.8" fill="#4a5560" textLength="52.2" lengthAdjust="spacingAndGlyphs">Mouang Taoy</text>
<text x="182.4" y="154.0" font-size="9.7" fill="#3f9a78" textLength="60.9" lengthAdjust="spacingAndGlyphs">Xe Ban Nuan</text>
<text x="186" y="163.5" font-size="8.2" fill="#59a88c" font-family="DejaVu Sans, sans-serif" textLength="52.0" lengthAdjust="spacingAndGlyphs">ປ່າສະຫງວນ</text>
<text x="186" y="171.5" font-size="7.0" fill="#59a88c" font-family="DejaVu Sans, sans-serif" textLength="52.0" lengthAdjust="spacingAndGlyphs">ແຫ່ງຊາດເຊບັ້ງນວນ</text>
<text x="184" y="180.0" font-size="7.0" fill="#59a88c" font-family="DejaVu Sans, sans-serif" textLength="57.0" lengthAdjust="spacingAndGlyphs">ແຂວງສະຫວັນນະເຂດ</text>
<text x="283.3" y="184.2" font-size="8.8" fill="#4a5560" textLength="36.5" lengthAdjust="spacingAndGlyphs">Saravane</text>
<text x="286" y="192.9" font-size="8.1" fill="#6a7378" font-family="DejaVu Sans, sans-serif" textLength="31.0" lengthAdjust="spacingAndGlyphs">ສາລະວັນ</text>
<text x="165.9" y="199.2" font-size="8.8" fill="#4a5560" textLength="26.5" lengthAdjust="spacingAndGlyphs">Muang</text>
<text x="143.4" y="209.2" font-size="8.8" fill="#4a5560" textLength="49.0" lengthAdjust="spacingAndGlyphs">Khôngxédôn</text>
<text x="142" y="218.5" font-size="8.2" fill="#6a7378" font-family="DejaVu Sans, sans-serif" textLength="51.0" lengthAdjust="spacingAndGlyphs">ເມືອງຄົງເຊໂດນ</text>
<text x="205.9" y="225.2" font-size="9.0" fill="#4a5560" textLength="37.4" lengthAdjust="spacingAndGlyphs">Laongam</text>
<text x="279.8" y="231.2" font-size="8.9" fill="#4a5560" textLength="32.5" lengthAdjust="spacingAndGlyphs">Thateng</text>
<text x="327.3" y="238.2" font-size="8.8" fill="#4a5560" textLength="30.0" lengthAdjust="spacingAndGlyphs">Sekong</text>
<text x="327.5" y="247.0" font-size="8.2" fill="#6a7378" font-family="DejaVu Sans, sans-serif" textLength="23.5" lengthAdjust="spacingAndGlyphs">ເຊກອງ</text>
<text x="175.9" y="239.2" font-size="8.8" fill="#4a5560" textLength="15.5" lengthAdjust="spacingAndGlyphs">Ban</text>
<text x="144.9" y="248.7" font-size="9.2" fill="#4a5560" textLength="47.5" lengthAdjust="spacingAndGlyphs">Nongphang</text>
<text x="37.5" y="243.6" font-size="9.0" fill="#4a5560" textLength="21.5" lengthAdjust="spacingAndGlyphs">Ubon</text>
<text x="10" y="252.7" font-size="9.2" fill="#4a5560" textLength="49.0" lengthAdjust="spacingAndGlyphs">Ratchathani</text>
<text x="200.9" y="271.1" font-size="10.3" fill="#2c3338" font-weight="bold" textLength="29.9" lengthAdjust="spacingAndGlyphs">Pakxe</text>
<text x="200.9" y="282.0" font-size="8.2" fill="#2c3338" font-weight="bold" font-family="DejaVu Sans, sans-serif" textLength="31.1" lengthAdjust="spacingAndGlyphs">ປາກເຊ</text>
<text x="258.3" y="263.2" font-size="9.0" fill="#4a5560" textLength="35.0" lengthAdjust="spacingAndGlyphs">Paksong</text>
<text x="258" y="272.5" font-size="8.2" fill="#6a7378" font-family="DejaVu Sans, sans-serif" textLength="31.0" lengthAdjust="spacingAndGlyphs">ປາກຊ່ອງ</text>
<text x="206.4" y="303.3" font-size="9.1" fill="#4a5560" textLength="48.4" lengthAdjust="spacingAndGlyphs">Champasak</text>
<text x="208" y="312.4" font-size="8.1" fill="#6a7378" font-family="DejaVu Sans, sans-serif" textLength="30.0" lengthAdjust="spacingAndGlyphs">ຈຳປາສັກ</text>
<text x="339.8" y="316.4" font-size="9.4" fill="#4a5560" textLength="32.4" lengthAdjust="spacingAndGlyphs">Attapeu</text>
<text x="0" y="411.7" font-size="9.6" fill="#3f9a78" textLength="50.0" lengthAdjust="spacingAndGlyphs">Kulen Prum</text>
<text x="0" y="422.3" font-size="9.7" fill="#3f9a78" textLength="51.0" lengthAdjust="spacingAndGlyphs">Tep Wildlife</text>
<text x="0" y="433.3" font-size="9.7" fill="#3f9a78" textLength="45.0" lengthAdjust="spacingAndGlyphs">Sanctuary</text>
<text x="2.5" y="464.0" font-size="8.8" fill="#4a5560" textLength="12.5" lengthAdjust="spacingAndGlyphs">Ker</text>
<text x="404.7" y="225.2" font-size="8.8" fill="#4a5560" textLength="47.5" lengthAdjust="spacingAndGlyphs">Dak Cheung</text>
<text x="501" y="173.7" font-size="8.8" fill="#4a5560" textLength="30.0" lengthAdjust="spacingAndGlyphs">Trà Kiệu</text>
<text x="523.6" y="211.2" font-size="8.8" fill="#4a5560" textLength="43.4" lengthAdjust="spacingAndGlyphs">Tp. Tam Kỳ</text>
<text x="592" y="368.5" font-size="8.8" fill="#4a5560" textLength="41.0" lengthAdjust="spacingAndGlyphs">Kon Giong</text>
<text x="507" y="388.0" font-size="9.0" fill="#4a5560" textLength="51.6" lengthAdjust="spacingAndGlyphs">Tp. Kon Tum</text>
<text x="572" y="409.5" font-size="8.8" fill="#4a5560" textLength="54.0" lengthAdjust="spacingAndGlyphs">De Kaleck Tih</text>
<text x="382.2" y="427.5" font-size="9.0" fill="#4a5560" textLength="42.5" lengthAdjust="spacingAndGlyphs">Ta Veaeng</text>
<text x="509.6" y="444.1" font-size="10.6" fill="#2f373d" font-weight="bold" textLength="50.0" lengthAdjust="spacingAndGlyphs">Tp. Pleiku</text>
<text x="603.6" y="434.0" font-size="8.8" fill="#4a5560" textLength="40.9" lengthAdjust="spacingAndGlyphs">Tx. An Khê</text>
<text x="427" y="462.5" font-size="8.8" fill="#4a5560" textLength="44.0" lengthAdjust="spacingAndGlyphs">Plei Rongol</text>
<text x="370.9" y="461.8" font-size="8.8" fill="#4a5560" textLength="34.1" lengthAdjust="spacingAndGlyphs">Du Chum</text>
<text x="572" y="505.9" font-size="8.9" fill="#4a5560" textLength="42.6" lengthAdjust="spacingAndGlyphs">Plei Bloum</text>
<text x="636" y="516.2" font-size="8.8" fill="#4a5560" textLength="41.0" lengthAdjust="spacingAndGlyphs">Phu Giang</text>
<text x="562" y="528.2" font-size="8.8" fill="#4a5560" textLength="46.6" lengthAdjust="spacingAndGlyphs">Tx. Ayun Pa</text>
<text x="596.6" y="549.2" font-size="8.9" fill="#4a5560" textLength="31.7" lengthAdjust="spacingAndGlyphs">Ban Bat</text>
<text x="615" y="568.2" font-size="8.8" fill="#4a5560" textLength="30.4" lengthAdjust="spacingAndGlyphs">Ban Bai</text>
<text x="630" y="585.4" font-size="9.3" fill="#4a5560" textLength="30.0" lengthAdjust="spacingAndGlyphs">Lac My</text>
<text x="678.8" y="592.2" font-size="8.8" fill="#4a5560" textLength="35.2" lengthAdjust="spacingAndGlyphs">Cam Lâm</text>
<text x="543" y="604.8" font-size="8.8" fill="#4a5560" textLength="48.8" lengthAdjust="spacingAndGlyphs">Tx. Buôn Hồ</text>
<text x="513" y="626.3" font-size="10.3" fill="#2f373d" font-weight="bold" textLength="44.6" lengthAdjust="spacingAndGlyphs">Tp. Buôn</text>
<text x="512" y="637.8" font-size="11.0" fill="#2f373d" font-weight="bold" textLength="48.8" lengthAdjust="spacingAndGlyphs">Ma Thuột</text>
<text x="599" y="652.2" font-size="8.8" fill="#4a5560" textLength="43.0" lengthAdjust="spacingAndGlyphs">Tầng Rang</text>
<text x="521.9" y="670.0" font-size="8.9" fill="#4a5560" textLength="38.1" lengthAdjust="spacingAndGlyphs">Buon Tria</text>
<text x="461.5" y="726.2" font-size="8.8" fill="#4a5560" textLength="38.9" lengthAdjust="spacingAndGlyphs">Gia Nghĩa</text>
<text x="386.8" y="654.2" font-size="9.0" fill="#4a5560" textLength="56.8" lengthAdjust="spacingAndGlyphs">Sen Monorom</text>
<text x="371" y="567.2" font-size="8.8" fill="#4a5560" textLength="52.7" lengthAdjust="spacingAndGlyphs">Kaoh Nheaek</text>
<text x="674.8" y="497.9" font-size="8.8" fill="#4a5560" textLength="54.1" lengthAdjust="spacingAndGlyphs">Tx. Sông Cầu</text>
<text x="712" y="567.6" font-size="9.9" fill="#2f373d" font-weight="bold" textLength="38.3" lengthAdjust="spacingAndGlyphs">Tuy Hòa</text>
<text x="683" y="690.5" font-size="9.6" fill="#2f373d" font-weight="bold" textLength="47.0" lengthAdjust="spacingAndGlyphs">Nha Trang</text>
<text x="8.2" y="658.7" font-size="9.2" fill="#4a5560" textLength="34.7" lengthAdjust="spacingAndGlyphs">Baribour</text>
<text x="41" y="680.3" font-size="9.1" fill="#4a5560" textLength="39.0" lengthAdjust="spacingAndGlyphs">Kampong</text>
<text x="41" y="689.6" font-size="8.9" fill="#4a5560" textLength="36.0" lengthAdjust="spacingAndGlyphs">Chhnang</text>
<text x="220" y="685.2" font-size="8.9" fill="#4a5560" textLength="38.0" lengthAdjust="spacingAndGlyphs">Chhloung</text>
<text x="536" y="136.7" font-size="10.3" fill="#2f373d" font-weight="bold" textLength="42.0" lengthAdjust="spacingAndGlyphs">Đà Nẵng</text>
<text x="622" y="269.2" font-size="8.8" fill="#4a5560" textLength="40.0" lengthAdjust="spacingAndGlyphs">Tp. Quảng</text>
<text x="621" y="279.5" font-size="9.7" fill="#4a5560" textLength="21.0" lengthAdjust="spacingAndGlyphs">Ngãi</text>
<text x="638" y="321.0" font-size="9.6" fill="#4a5560" textLength="38.0" lengthAdjust="spacingAndGlyphs">Đức Phổ</text>
<text x="644" y="368.9" font-size="9.1" fill="#4a5560" textLength="44.0" lengthAdjust="spacingAndGlyphs">Hoài Nhơn</text>
<text x="680" y="465.5" font-size="9.7" fill="#4a5560" textLength="42.0" lengthAdjust="spacingAndGlyphs">Qui Nhơn</text>
<text x="664" y="654.2" font-size="8.9" fill="#4a5560" textLength="52.0" lengthAdjust="spacingAndGlyphs">Tx. Ninh Hòa</text>
<text x="690" y="731.2" font-size="8.8" fill="#4a5560" textLength="40.0" lengthAdjust="spacingAndGlyphs">Cam Ranh</text>
<text x="330" y="563.2" font-size="8.8" fill="#4a5560" textLength="42.0" lengthAdjust="spacingAndGlyphs">Stung Treng</text>
<text x="371" y="522.5" font-size="9.7" fill="#3f9a78" textLength="21.0" lengthAdjust="spacingAndGlyphs">phat</text>
<text x="371" y="532.5" font-size="9.7" fill="#3f9a78" textLength="21.0" lengthAdjust="spacingAndGlyphs">dlife</text>
<text x="371" y="543.5" font-size="9.7" fill="#3f9a78" textLength="24.0" lengthAdjust="spacingAndGlyphs">tuary</text>
<text x="579" y="736.1" font-size="11.5" fill="#3a4248" textLength="50.0" lengthAdjust="spacingAndGlyphs">Đà Lạt</text>
<text x="18.5" y="262.0" font-size="7.6" fill="#6a7378" textLength="40.5" lengthAdjust="spacingAndGlyphs">เทศบาลนคร</text>
<text x="18.5" y="271.0" font-size="7.6" fill="#6a7378" textLength="40.5" lengthAdjust="spacingAndGlyphs">อุบลราชธานี</text>
<text x="0" y="473.9" font-size="7.6" fill="#6a7378" textLength="17.5" lengthAdjust="spacingAndGlyphs">គេរ</text>
<text x="30" y="473.9" font-size="7.6" fill="#6a7378" textLength="29.0" lengthAdjust="spacingAndGlyphs">ក្រុងព្រះវិហារ</text>
<text x="382" y="435.4" font-size="7.6" fill="#6a7378" textLength="20.0" lengthAdjust="spacingAndGlyphs">តាវែង</text>
<text x="371" y="470.6" font-size="7.6" fill="#6a7378" textLength="14.0" lengthAdjust="spacingAndGlyphs">ឌូជុំ</text>
<text x="371" y="576.6" font-size="7.6" fill="#6a7378" textLength="27.0" lengthAdjust="spacingAndGlyphs">កោះញែក</text>
<text x="386.8" y="663.0" font-size="7.6" fill="#6a7378" textLength="64.7" lengthAdjust="spacingAndGlyphs">ក្រុងសែនមនោរម្យ</text>
<text x="8.2" y="667.3" font-size="7.6" fill="#6a7378" textLength="27.2" lengthAdjust="spacingAndGlyphs">បរិបូណ៌</text>
<text x="41" y="698.3" font-size="7.6" fill="#6a7378" textLength="48.5" lengthAdjust="spacingAndGlyphs">ក្រុងកំពង់ឆ្នាំង</text>
<text x="220" y="693.4" font-size="7.6" fill="#6a7378" textLength="13.0" lengthAdjust="spacingAndGlyphs">ឆ្លូង</text>
<text x="22.4" y="590.9" font-size="7.6" fill="#6a7378" textLength="24.2" lengthAdjust="spacingAndGlyphs">ស្ទោង</text>
<text x="95" y="719.2" font-size="7.6" fill="#6a7378" textLength="16.8" lengthAdjust="spacingAndGlyphs">ស្គន់</text>
<text x="262.8" y="717.3" font-size="7.6" fill="#6a7378" textLength="16.7" lengthAdjust="spacingAndGlyphs">សួង</text>
<text x="27.5" y="153.7" font-size="9.3" font-weight="bold" fill="#6a737a" textLength="41.5" lengthAdjust="spacing">AMNAT</text>
<text x="20" y="164.2" font-size="9.3" font-weight="bold" fill="#6a737a" textLength="56.4" lengthAdjust="spacing">CHAROEN</text>
<text x="98.4" y="278.2" font-size="9.3" font-weight="bold" fill="#6a737a" textLength="31.6" lengthAdjust="spacing">UBON</text>
<text x="71.4" y="289.2" font-size="9.3" font-weight="bold" fill="#6a737a" textLength="84.5" lengthAdjust="spacing">RATCHATHANI</text>
<text x="0" y="328.6" font-size="9.3" font-weight="bold" fill="#6a737a" textLength="34.0" lengthAdjust="spacing">SAKET</text>
</g>
<g fill="#fff" stroke="#4a5560" stroke-width=".8">
<circle cx="310" cy="133.5" r="1.5"/>
<circle cx="281" cy="185" r="1.5"/>
<circle cx="194.5" cy="206" r="1.5"/>
<circle cx="246" cy="222" r="1.5"/>
<circle cx="276.5" cy="228" r="1.5"/>
<circle cx="324.5" cy="239" r="1.5"/>
<circle cx="193.5" cy="239" r="1.5"/>
<circle cx="60" cy="251" r="1.5"/>
<circle cx="198" cy="268" r="1.5"/>
<circle cx="256" cy="264" r="1.5"/>
<circle cx="204" cy="304" r="1.5"/>
<circle cx="401" cy="222" r="1.5"/>
<circle cx="337.5" cy="316" r="1.5"/>
<circle cx="533" cy="170.5" r="1.5"/>
<circle cx="569.5" cy="208" r="1.5"/>
<circle cx="590" cy="365.3" r="1.5"/>
<circle cx="505.3" cy="384.8" r="1.5"/>
<circle cx="570" cy="406.3" r="1.5"/>
<circle cx="507.7" cy="440.5" r="1.5"/>
<circle cx="602" cy="430.8" r="1.5"/>
<circle cx="473" cy="459.3" r="1.5"/>
<circle cx="570.2" cy="502.7" r="1.5"/>
<circle cx="634" cy="513" r="1.5"/>
<circle cx="560" cy="525" r="1.5"/>
<circle cx="594.8" cy="546" r="1.5"/>
<circle cx="613" cy="565" r="1.5"/>
<circle cx="662" cy="582" r="1.5"/>
<circle cx="677" cy="589" r="1.5"/>
<circle cx="541.2" cy="601.6" r="1.5"/>
<circle cx="510" cy="627.5" r="1.5"/>
<circle cx="597" cy="649" r="1.5"/>
<circle cx="520" cy="666.8" r="1.5"/>
<circle cx="459.5" cy="723" r="1.5"/>
<circle cx="385" cy="652" r="1.5"/>
<circle cx="673" cy="494.7" r="1.5"/>
<circle cx="40" cy="686.5" r="1.5"/>
<circle cx="218.5" cy="682" r="1.5"/>
</g>
<path d="M727 468.5 L1110 457" stroke="#3f6fe8" stroke-width="1.8" fill="none"/>
<path d="M703 478.5 H716 M719 478.5 H722 M720 473 V481" stroke="#ff2222" stroke-width="1" stroke-dasharray="5 2" fill="none"/>
<text x="716.5" y="485.4" font-size="8.2" font-weight="bold" fill="#000" paint-order="stroke" stroke="#fff" stroke-width="2.2" stroke-linejoin="round" textLength="29.5" lengthAdjust="spacingAndGlyphs">SAR 631</text>
<g font-size="8.2" fill="#000" paint-order="stroke" stroke="#fff" stroke-width="1.7" stroke-linejoin="round">
<text x="-82.2" y="735.6" textLength="50" lengthAdjust="spacingAndGlyphs">104° 00′ 00″ E</text>
<text x="-12.2" y="735.6" textLength="50" lengthAdjust="spacingAndGlyphs">104° 30′ 00″ E</text>
<text x="57.9" y="735.6" textLength="50" lengthAdjust="spacingAndGlyphs">105° 00′ 00″ E</text>
<text x="127.9" y="735.6" textLength="50" lengthAdjust="spacingAndGlyphs">105° 30′ 00″ E</text>
<text x="198.0" y="735.6" textLength="50" lengthAdjust="spacingAndGlyphs">106° 00′ 00″ E</text>
<text x="268.0" y="735.6" textLength="50" lengthAdjust="spacingAndGlyphs">106° 30′ 00″ E</text>
<text x="338.1" y="735.6" textLength="50" lengthAdjust="spacingAndGlyphs">107° 00′ 00″ E</text>
<text x="408.1" y="735.6" textLength="50" lengthAdjust="spacingAndGlyphs">107° 30′ 00″ E</text>
<text x="478.1" y="735.6" textLength="50" lengthAdjust="spacingAndGlyphs">108° 00′ 00″ E</text>
<text x="548.2" y="735.6" textLength="50" lengthAdjust="spacingAndGlyphs">108° 30′ 00″ E</text>
<text x="618.2" y="735.6" textLength="50" lengthAdjust="spacingAndGlyphs">109° 00′ 00″ E</text>
<text x="688.3" y="735.6" textLength="50" lengthAdjust="spacingAndGlyphs">109° 30′ 00″ E</text>
<text x="758.4" y="735.6" textLength="50" lengthAdjust="spacingAndGlyphs">110° 00′ 00″ E</text>
<text x="828.4" y="735.6" textLength="50" lengthAdjust="spacingAndGlyphs">110° 30′ 00″ E</text>
<text x="898.4" y="735.6" textLength="50" lengthAdjust="spacingAndGlyphs">111° 00′ 00″ E</text>
<text x="968.5" y="735.6" textLength="50" lengthAdjust="spacingAndGlyphs">111° 30′ 00″ E</text>
<text x="1038.5" y="735.6" textLength="50" lengthAdjust="spacingAndGlyphs">112° 00′ 00″ E</text>
<text x="1108.6" y="735.6" textLength="50" lengthAdjust="spacingAndGlyphs">112° 30′ 00″ E</text>
<text x="1178.7" y="735.6" textLength="50" lengthAdjust="spacingAndGlyphs">113° 00′ 00″ E</text>
<text x="1248.7" y="735.6" textLength="50" lengthAdjust="spacingAndGlyphs">113° 30′ 00″ E</text>
<text x="1318.8" y="735.6" textLength="50" lengthAdjust="spacingAndGlyphs">114° 00′ 00″ E</text>
<text x="1388.8" y="735.6" textLength="50" lengthAdjust="spacingAndGlyphs">114° 30′ 00″ E</text>
<text x="1379.5" y="147.1" textLength="47" lengthAdjust="spacingAndGlyphs">16° 00′ 00″ N</text>
<text x="1379.5" y="220.1" textLength="47" lengthAdjust="spacingAndGlyphs">15° 30′ 00″ N</text>
<text x="1379.5" y="293.1" textLength="47" lengthAdjust="spacingAndGlyphs">15° 00′ 00″ N</text>
<text x="1379.5" y="365.6" textLength="47" lengthAdjust="spacingAndGlyphs">14° 30′ 00″ N</text>
<text x="1379.5" y="438.1" textLength="47" lengthAdjust="spacingAndGlyphs">14° 00′ 00″ N</text>
<text x="1379.5" y="510.1" textLength="47" lengthAdjust="spacingAndGlyphs">13° 30′ 00″ N</text>
<text x="1379.5" y="582.6" textLength="47" lengthAdjust="spacingAndGlyphs">13° 00′ 00″ N</text>
<text x="1379.5" y="654.6" textLength="47" lengthAdjust="spacingAndGlyphs">12° 30′ 00″ N</text>
<text x="1379.5" y="726.1" textLength="47" lengthAdjust="spacingAndGlyphs">12° 00′ 00″ N</text>
</g>
<g stroke="#000" stroke-width="0.9" stroke-linejoin="miter">
<polygon points="520.1,126.4 533.6,128.1 529.9,135.9" fill="#111"/><polygon points="525.8,121.1 525.2,134.7 517.2,131.6" fill="#9b9b9b"/><polygon points="537.6,129.6 525.0,134.6 524.5,126.0" fill="#111"/><polygon points="523.8,128.2 537.3,130.4 533.3,138.0" fill="#111"/><polygon points="519.7,136.7 521.9,123.3 529.5,127.3" fill="#111"/><polygon points="530.5,121.7 530.9,135.3 522.7,132.8" fill="#111"/><polygon points="532.3,140.5 534.0,127.0 541.7,130.7" fill="#111"/><polygon points="613.0,131.8 603.1,141.2 599.5,133.4" fill="#f39a10"/><polygon points="600.1,133.7 611.6,126.5 613.7,134.9" fill="#f39a10"/><polygon points="613.4,129.7 602.2,137.4 599.8,129.1" fill="#f39a10"/><polygon points="610.6,124.3 620.4,133.8 612.8,137.8" fill="#f39a10"/><polygon points="585.5,133.7 599.0,133.1 596.7,141.4" fill="#f39a10"/><polygon points="615.8,140.4 611.1,127.7 619.7,127.4" fill="#f39a10"/><polygon points="598.9,140.0 585.4,141.1 587.4,132.7" fill="#1a8fd4"/><polygon points="640.9,128.7 632.9,139.7 627.9,132.6" fill="#f39a10"/><polygon points="590.5,175.2 597.8,186.7 589.4,188.7" fill="#1a8fd4"/><polygon points="575.0,162.7 561.8,159.4 566.4,152.2" fill="#1a8fd4"/><polygon points="579.1,180.5 581.5,167.1 589.1,171.3" fill="#1a8fd4"/><polygon points="586.7,181.5 597.5,173.2 600.3,181.3" fill="#1a8fd4"/><polygon points="560.7,163.6 568.4,152.4 573.6,159.2" fill="#1a8fd4"/><polygon points="602.3,215.1 614.0,222.1 607.4,227.7" fill="#1a8fd4"/><polygon points="588.1,178.5 575.3,173.9 580.5,167.2" fill="#1a8fd4"/><polygon points="595.5,188.9 589.1,200.9 583.2,194.7" fill="#1a8fd4"/><polygon points="578.1,158.8 588.2,167.9 580.8,172.2" fill="#1a8fd4"/><polygon points="586.7,177.8 598.5,184.5 592.1,190.3" fill="#1a8fd4"/><polygon points="610.5,208.5 597.0,210.5 598.6,202.0" fill="#1a8fd4"/><polygon points="587.8,175.6 579.8,186.7 574.8,179.7" fill="#1a8fd4"/><polygon points="579.3,161.0 587.7,150.4 592.4,157.6" fill="#1a8fd4"/><polygon points="571.9,141.3 575.9,154.3 567.3,154.1" fill="#1a8fd4"/><polygon points="580.2,184.9 585.1,172.2 591.8,177.7" fill="#1a8fd4"/><polygon points="583.7,172.0 592.0,161.2 596.8,168.3" fill="#9b9b9b"/><polygon points="598.4,194.2 609.5,202.1 602.6,207.2" fill="#1a8fd4"/><polygon points="608.0,209.6 596.8,201.8 603.7,196.7" fill="#1a8fd4"/><polygon points="575.7,183.3 582.5,171.5 588.2,177.9" fill="#1a8fd4"/><polygon points="580.3,145.2 575.4,157.8 568.7,152.4" fill="#1a8fd4"/><polygon points="593.9,184.1 598.2,197.1 589.6,197.0" fill="#1a8fd4"/><polygon points="584.4,150.0 582.8,163.5 575.0,159.8" fill="#1a8fd4"/><polygon points="588.5,156.9 580.7,168.0 575.6,161.1" fill="#1a8fd4"/><polygon points="584.6,161.2 579.3,173.7 572.9,168.0" fill="#1a8fd4"/><polygon points="593.5,189.7 587.7,177.5 596.2,176.4" fill="#1a8fd4"/><polygon points="589.2,175.5 583.2,163.2 591.7,162.1" fill="#1a8fd4"/><polygon points="602.1,189.4 604.5,202.8 595.9,201.5" fill="#1a8fd4"/><polygon points="598.1,213.1 608.4,221.9 601.1,226.4" fill="#1a8fd4"/><polygon points="596.1,196.8 602.1,209.0 593.6,210.2" fill="#1a8fd4"/><polygon points="595.9,206.2 606.5,214.7 599.3,219.4" fill="#1a8fd4"/><polygon points="580.9,181.9 579.3,168.4 587.7,170.1" fill="#1a8fd4"/><polygon points="589.8,203.6 603.4,204.1 600.4,212.1" fill="#1a8fd4"/><polygon points="609.2,205.3 598.2,213.3 595.6,205.2" fill="#1a8fd4"/><polygon points="589.2,191.8 582.8,179.9 591.2,178.4" fill="#1a8fd4"/><polygon points="565.6,160.2 573.2,171.5 565.0,173.8" fill="#9b9b9b"/><polygon points="603.4,169.5 600.9,182.9 593.3,178.7" fill="#1a8fd4"/><polygon points="578.8,156.2 568.0,164.5 565.2,156.4" fill="#1a8fd4"/><polygon points="574.9,172.7 569.0,160.5 577.5,159.4" fill="#1a8fd4"/><polygon points="591.8,192.2 589.0,205.5 581.6,201.1" fill="#f39a10"/><polygon points="601.7,201.6 595.7,189.4 604.2,188.2" fill="#1a8fd4"/><polygon points="581.9,165.9 568.6,163.3 572.8,155.8" fill="#f39a10"/><polygon points="595.5,205.9 608.2,201.1 608.6,209.7" fill="#1a8fd4"/><polygon points="580.6,151.1 571.4,161.1 567.2,153.6" fill="#1a8fd4"/><polygon points="587.1,148.5 579.5,159.7 574.3,152.9" fill="#f39a10"/><polygon points="600.8,210.4 609.2,199.7 613.9,206.9" fill="#1a8fd4"/><polygon points="576.1,171.5 589.7,171.3 587.1,179.5" fill="#1a8fd4"/><polygon points="594.7,209.3 592.6,195.9 601.1,197.3" fill="#1a8fd4"/><polygon points="597.4,213.5 599.4,226.9 590.9,225.4" fill="#1a8fd4"/><polygon points="591.2,160.7 578.6,165.8 578.1,157.2" fill="#1a8fd4"/><polygon points="594.8,184.2 594.0,197.8 586.0,194.6" fill="#1a8fd4"/><polygon points="594.9,204.8 603.7,194.4 608.2,201.8" fill="#1a8fd4"/><polygon points="597.1,206.5 590.6,218.4 584.7,212.1" fill="#1a8fd4"/><polygon points="578.3,151.3 581.0,164.6 572.5,163.6" fill="#1a8fd4"/><polygon points="594.7,176.3 585.3,186.1 581.3,178.5" fill="#1a8fd4"/><polygon points="586.6,189.3 587.1,175.7 595.2,178.7" fill="#1a8fd4"/><polygon points="574.5,168.1 586.3,174.8 579.9,180.6" fill="#1a8fd4"/><polygon points="580.0,154.2 566.6,156.2 568.0,147.8" fill="#1a8fd4"/><polygon points="595.3,214.4 586.8,203.8 594.8,200.8" fill="#1a8fd4"/><polygon points="588.2,199.0 592.8,186.2 599.5,191.5" fill="#1a8fd4"/><polygon points="578.7,169.7 575.1,156.7 583.7,157.1" fill="#1a8fd4"/><polygon points="581.2,157.7 593.3,163.9 587.1,169.9" fill="#1a8fd4"/><polygon points="597.2,213.9 610.4,217.2 605.8,224.4" fill="#1a8fd4"/><polygon points="586.5,159.4 575.0,152.1 581.7,146.7" fill="#1a8fd4"/><polygon points="575.6,175.0 584.8,165.0 589.0,172.6" fill="#1a8fd4"/><polygon points="591.7,200.6 600.5,211.0 592.5,214.2" fill="#1a8fd4"/><polygon points="590.4,188.9 597.2,200.7 588.8,202.4" fill="#1a8fd4"/><polygon points="587.4,168.2 576.3,160.4 583.2,155.3" fill="#1a8fd4"/><polygon points="590.0,182.5 601.3,174.9 603.6,183.2" fill="#1a8fd4"/><polygon points="611.7,225.8 598.4,222.6 603.0,215.3" fill="#1a8fd4"/><polygon points="583.5,166.9 570.2,163.7 574.8,156.4" fill="#1a8fd4"/><polygon points="599.6,184.6 587.8,177.8 594.2,172.1" fill="#1a8fd4"/><polygon points="586.4,179.4 591.9,191.9 583.4,192.7" fill="#1a8fd4"/><polygon points="612.5,195.7 609.7,209.0 602.2,204.7" fill="#1a8fd4"/><polygon points="577.9,162.9 591.4,164.5 587.8,172.3" fill="#1a8fd4"/><polygon points="592.3,208.5 605.8,210.0 602.2,217.9" fill="#f39a10"/><polygon points="587.7,171.0 582.9,158.3 591.5,158.0" fill="#9b9b9b"/><polygon points="594.5,160.6 594.0,174.1 586.0,171.1" fill="#1a8fd4"/><polygon points="588.4,204.3 595.1,192.6 600.9,199.0" fill="#1a8fd4"/><polygon points="617.4,239.9 622.2,227.1 628.8,232.6" fill="#1a8fd4"/><polygon points="606.9,220.2 593.7,217.0 598.3,209.7" fill="#1a8fd4"/><polygon points="609.0,230.3 614.8,218.1 621.0,224.0" fill="#1a8fd4"/><polygon points="599.9,212.9 586.7,216.3 587.4,207.7" fill="#1a8fd4"/><polygon points="587.0,227.6 593.4,215.6 599.3,221.8" fill="#1a8fd4"/><polygon points="619.5,221.6 609.8,231.2 606.0,223.4" fill="#1b7a4a"/><polygon points="608.0,209.0 612.8,221.7 604.2,222.0" fill="#1a8fd4"/><polygon points="596.8,213.6 593.7,200.4 602.2,201.2" fill="#1a8fd4"/><polygon points="606.6,210.4 602.0,223.2 595.2,217.9" fill="#19e619"/><polygon points="614.2,233.0 625.8,240.1 619.2,245.7" fill="#111"/><polygon points="622.1,241.3 632.4,232.4 635.7,240.4" fill="#1a8fd4"/><polygon points="617.5,244.9 629.7,239.0 630.8,247.5" fill="#e6f0c0"/><polygon points="601.5,200.6 607.3,213.0 598.7,213.9" fill="#19e619"/><polygon points="630.2,237.9 620.9,228.0 628.7,224.4" fill="#1a8fd4"/><polygon points="588.7,206.3 601.9,209.6 597.2,216.9" fill="#1b7a4a"/><polygon points="615.8,240.8 626.4,232.2 629.4,240.3" fill="#1a8fd4"/><polygon points="598.4,208.7 590.0,219.4 585.3,212.2" fill="#1a8fd4"/><polygon points="614.9,227.2 601.4,225.3 605.3,217.6" fill="#1a8fd4"/><polygon points="608.8,200.0 597.0,206.8 595.3,198.3" fill="#1a8fd4"/><polygon points="598.5,223.0 594.4,210.0 603.0,210.2" fill="#1a8fd4"/><polygon points="593.6,212.9 607.0,210.8 605.6,219.3" fill="#1a8fd4"/><polygon points="598.5,203.9 599.4,217.4 591.1,215.2" fill="#ee1c25"/><polygon points="586.5,216.6 592.9,204.6 598.8,210.8" fill="#1a8fd4"/><polygon points="595.0,209.4 603.5,198.7 608.2,205.9" fill="#1a8fd4"/><polygon points="621.8,239.4 610.2,232.2 616.8,226.7" fill="#ee1c25"/><polygon points="601.0,222.9 606.6,210.5 613.0,216.4" fill="#e6f0c0"/><polygon points="591.3,209.9 604.6,212.8 600.2,220.2" fill="#111"/><polygon points="621.1,248.8 617.3,235.8 625.9,236.1" fill="#1a8fd4"/><polygon points="621.7,249.5 617.8,236.5 626.4,236.7" fill="#1a8fd4"/><polygon points="617.5,231.4 631.1,231.1 628.5,239.3" fill="#ee1c25"/><polygon points="607.2,242.3 614.6,230.9 619.9,237.6" fill="#e6f0c0"/><polygon points="605.0,212.4 592.9,206.2 599.1,200.2" fill="#1a8fd4"/><polygon points="604.8,227.3 611.0,215.3 617.0,221.5" fill="#1a8fd4"/><polygon points="615.8,237.8 608.2,226.6 616.5,224.3" fill="#1a8fd4"/><polygon points="587.6,208.8 598.7,216.5 591.8,221.7" fill="#1a8fd4"/><polygon points="598.6,217.5 585.7,221.7 585.8,213.1" fill="#19e619"/><polygon points="602.0,211.5 589.6,217.1 588.7,208.5" fill="#1a8fd4"/><polygon points="620.8,240.1 616.0,227.4 624.6,227.0" fill="#19e619"/><polygon points="606.8,209.9 617.3,218.5 610.0,223.1" fill="#19e619"/><polygon points="610.6,206.9 608.3,220.3 600.7,216.3" fill="#1a8fd4"/><polygon points="593.1,216.6 601.1,205.6 606.1,212.6" fill="#1a8fd4"/><polygon points="619.3,225.5 618.5,239.0 610.5,235.8" fill="#19e619"/><polygon points="605.7,212.7 601.6,225.7 594.6,220.6" fill="#1b7a4a"/><polygon points="597.5,228.5 590.5,216.9 598.9,215.0" fill="#1a8fd4"/><polygon points="609.6,216.0 614.4,228.7 605.8,229.1" fill="#1a8fd4"/><polygon points="604.8,225.6 606.8,234.9 600.8,234.3" fill="#111"/><polygon points="602.1,223.3 606.9,231.5 601.0,232.7" fill="#1a8fd4"/><polygon points="604.7,224.6 603.3,234.0 597.9,231.3" fill="#ee1c25"/><polygon points="601.4,223.1 592.2,225.4 592.7,219.4" fill="#1a8fd4"/><polygon points="595.6,226.2 603.8,231.1 599.2,235.0" fill="#ee1c25"/><polygon points="606.3,239.7 603.2,230.7 609.2,230.6" fill="#ee1c25"/><polygon points="605.5,238.2 612.5,231.7 615.0,237.2" fill="#111"/><polygon points="643.4,260.7 636.2,272.2 630.7,265.5" fill="#1b7a4a"/><polygon points="636.7,267.2 623.3,265.2 627.2,257.5" fill="#f39a10"/><polygon points="647.6,252.2 641.9,264.5 635.7,258.6" fill="#1a8fd4"/><polygon points="656.0,304.3 643.0,308.4 643.2,299.8" fill="#1a8fd4"/><polygon points="614.3,241.1 618.7,253.9 610.1,254.0" fill="#1a8fd4"/><polygon points="631.8,276.6 644.6,281.0 639.4,287.9" fill="#1a8fd4"/><polygon points="629.5,252.0 642.8,254.8 638.5,262.3" fill="#f39a10"/><polygon points="638.5,263.3 629.5,253.1 637.4,249.8" fill="#1a8fd4"/><polygon points="624.2,259.1 637.7,257.7 635.8,266.1" fill="#1a8fd4"/><polygon points="641.3,258.4 651.6,267.2 644.3,271.7" fill="#1a8fd4"/><polygon points="660.2,301.5 649.1,309.3 646.6,301.1" fill="#9b9b9b"/><polygon points="619.5,237.5 632.5,233.4 632.4,242.0" fill="#9b9b9b"/><polygon points="641.2,292.1 635.7,279.6 644.3,278.8" fill="#1a8fd4"/><polygon points="653.9,307.5 640.8,303.9 645.5,296.8" fill="#1a8fd4"/><polygon points="624.0,259.8 636.6,254.6 637.2,263.2" fill="#1b7a4a"/><polygon points="637.1,292.6 637.6,279.0 645.6,282.0" fill="#9b9b9b"/><polygon points="631.7,269.2 639.1,257.8 644.4,264.6" fill="#f39a10"/><polygon points="623.4,246.7 611.5,253.3 609.9,244.8" fill="#9b9b9b"/><polygon points="653.7,308.5 644.2,298.9 651.9,295.1" fill="#9b9b9b"/><polygon points="644.2,270.3 640.8,283.5 633.6,278.8" fill="#9b9b9b"/><polygon points="627.0,251.2 640.6,251.9 637.5,259.9" fill="#1a8fd4"/><polygon points="643.9,254.9 633.6,246.1 641.0,241.7" fill="#1a8fd4"/><polygon points="648.1,275.4 634.8,278.1 635.9,269.5" fill="#1a8fd4"/><polygon points="644.2,288.3 638.0,300.5 632.0,294.3" fill="#1a8fd4"/><polygon points="631.6,271.6 645.2,270.7 643.0,279.0" fill="#111"/><polygon points="661.7,299.2 650.7,291.3 657.6,286.2" fill="#1a8fd4"/><polygon points="637.0,262.7 650.0,266.7 645.0,273.7" fill="#1a8fd4"/><polygon points="643.0,297.7 656.2,294.5 655.5,303.1" fill="#1b7a4a"/><polygon points="647.7,301.6 642.6,289.0 651.1,288.4" fill="#9b9b9b"/><polygon points="625.2,228.1 638.0,232.7 632.7,239.5" fill="#9b9b9b"/><polygon points="639.9,306.8 653.4,305.3 651.7,313.7" fill="#f39a10"/><polygon points="635.6,244.0 644.3,254.5 636.2,257.6" fill="#f39a10"/><polygon points="649.1,279.2 662.2,283.0 657.3,290.1" fill="#111"/><polygon points="650.0,295.5 663.5,293.8 661.8,302.3" fill="#f39a10"/><polygon points="629.2,257.5 636.8,246.2 642.1,253.0" fill="#f39a10"/><polygon points="638.2,265.0 629.2,254.7 637.2,251.4" fill="#111"/><polygon points="651.7,283.4 650.1,296.9 642.3,293.2" fill="#f39a10"/><polygon points="627.7,274.9 641.3,274.0 639.1,282.3" fill="#f39a10"/><polygon points="624.3,241.3 610.7,241.3 613.5,233.1" fill="#9b9b9b"/><polygon points="645.8,275.1 639.6,263.0 648.1,261.7" fill="#f39a10"/><polygon points="630.2,248.3 632.1,261.7 623.6,260.2" fill="#f39a10"/><polygon points="635.1,274.6 630.7,261.8 639.3,261.7" fill="#f39a10"/><polygon points="645.7,279.9 643.2,293.3 635.6,289.1" fill="#1a8fd4"/><polygon points="627.8,248.8 629.2,262.3 620.8,260.5" fill="#9b9b9b"/><polygon points="641.6,265.5 629.0,260.4 634.6,253.8" fill="#1a8fd4"/><polygon points="642.8,256.9 641.4,270.4 633.6,266.9" fill="#9b9b9b"/><polygon points="645.7,275.8 632.1,274.9 635.4,266.9" fill="#f39a10"/><polygon points="652.7,289.3 647.9,302.0 641.2,296.5" fill="#1a8fd4"/><polygon points="652.7,278.1 642.4,287.1 639.1,279.1" fill="#9b9b9b"/><polygon points="629.8,252.2 622.2,263.4 617.0,256.6" fill="#9b9b9b"/><polygon points="640.2,256.3 642.6,269.7 634.1,268.5" fill="#f39a10"/><polygon points="639.1,288.8 627.7,281.4 634.4,276.0" fill="#f39a10"/><polygon points="646.5,299.6 658.9,293.9 659.8,302.5" fill="#1a8fd4"/><polygon points="651.0,310.9 659.1,300.0 664.0,307.0" fill="#f39a10"/><polygon points="639.0,268.5 640.6,281.9 632.2,280.2" fill="#9b9b9b"/><polygon points="642.2,293.6 633.6,283.0 641.7,280.0" fill="#1a8fd4"/><polygon points="634.9,241.6 621.4,243.4 623.0,234.9" fill="#f39a10"/><polygon points="641.7,266.9 629.8,260.4 636.1,254.5" fill="#f39a10"/><polygon points="638.4,288.8 651.9,290.6 648.2,298.3" fill="#1a8fd4"/><polygon points="640.4,273.6 639.5,260.0 647.8,262.2" fill="#1a8fd4"/><polygon points="644.6,273.8 632.0,268.5 637.7,262.0" fill="#1a8fd4"/><polygon points="647.5,297.4 660.8,294.5 659.9,303.1" fill="#111"/><polygon points="623.7,245.7 616.6,234.0 625.0,232.1" fill="#f39a10"/><polygon points="645.6,286.7 656.7,294.5 649.8,299.6" fill="#f39a10"/><polygon points="641.5,264.9 628.2,262.1 632.5,254.7" fill="#1a8fd4"/><polygon points="666.8,305.0 653.3,303.7 656.8,295.9" fill="#1b7a4a"/><polygon points="626.6,257.6 638.6,251.1 640.1,259.6" fill="#f39a10"/><polygon points="646.8,271.4 649.1,284.8 640.6,283.5" fill="#f39a10"/><polygon points="611.8,261.1 623.4,254.1 625.3,262.5" fill="#9b9b9b"/><polygon points="632.3,267.3 645.9,268.5 642.5,276.4" fill="#1a8fd4"/><polygon points="625.8,248.2 615.8,257.4 612.3,249.6" fill="#9b9b9b"/><polygon points="641.6,300.2 646.3,287.5 653.0,292.8" fill="#f39a10"/><polygon points="625.9,272.4 618.6,260.9 627.0,258.8" fill="#1a8fd4"/><polygon points="633.9,294.9 646.9,290.8 646.8,299.4" fill="#1a8fd4"/><polygon points="621.6,261.6 629.4,250.5 634.5,257.4" fill="#f39a10"/><polygon points="630.3,267.6 642.1,274.3 635.7,280.1" fill="#1a8fd4"/><polygon points="646.6,313.2 652.6,301.0 658.7,307.1" fill="#1a8fd4"/><polygon points="623.2,254.9 613.8,264.7 609.8,257.1" fill="#9b9b9b"/><polygon points="630.0,250.3 635.7,238.0 642.0,243.9" fill="#9b9b9b"/><polygon points="635.8,285.5 649.0,282.0 648.4,290.6" fill="#111"/><polygon points="643.8,299.0 630.2,299.6 632.5,291.4" fill="#1a8fd4"/><polygon points="637.5,287.4 628.8,277.0 636.7,273.8" fill="#f39a10"/><polygon points="641.5,244.8 633.4,255.7 628.4,248.6" fill="#f39a10"/><polygon points="653.1,301.5 640.2,305.7 640.3,297.1" fill="#1a8fd4"/><polygon points="636.3,255.7 624.0,261.4 623.0,252.9" fill="#9b9b9b"/><polygon points="675.3,258.6 679.2,271.6 670.6,271.3" fill="#f39a10"/><polygon points="665.7,267.9 678.9,271.3 674.3,278.5" fill="#f39a10"/><polygon points="695.4,248.5 695.5,262.1 687.3,259.4" fill="#f39a10"/><polygon points="679.3,243.7 688.7,253.6 680.9,257.2" fill="#f39a10"/><polygon points="673.2,240.7 686.6,238.5 685.3,247.0" fill="#f39a10"/><polygon points="682.3,251.6 677.7,264.4 670.9,259.1" fill="#f39a10"/><polygon points="684.3,258.2 671.1,254.9 675.7,247.6" fill="#1a8fd4"/><polygon points="667.8,232.3 668.9,245.9 660.6,243.8" fill="#f39a10"/><polygon points="697.8,253.2 687.2,244.7 694.4,240.0" fill="#1a8fd4"/><polygon points="673.9,243.9 671.7,257.3 664.1,253.3" fill="#f39a10"/><polygon points="666.1,236.7 661.9,249.7 655.0,244.5" fill="#f39a10"/><polygon points="671.1,250.9 678.3,239.4 683.8,246.0" fill="#f39a10"/><polygon points="674.3,226.8 679.6,239.3 671.0,240.0" fill="#f39a10"/><polygon points="688.6,239.4 696.4,250.5 688.2,253.0" fill="#f39a10"/><polygon points="670.5,241.1 673.3,254.4 664.7,253.4" fill="#f39a10"/><polygon points="676.6,262.5 684.1,251.2 689.4,258.0" fill="#1a8fd4"/><polygon points="660.2,250.2 671.2,258.3 664.2,263.2" fill="#f39a10"/><polygon points="689.7,246.3 678.9,238.0 686.1,233.2" fill="#f39a10"/><polygon points="686.3,254.8 686.2,268.4 678.1,265.7" fill="#f39a10"/><polygon points="676.0,232.6 672.8,245.8 665.5,241.3" fill="#f39a10"/><polygon points="682.8,260.7 669.8,256.8 674.8,249.8" fill="#f39a10"/><polygon points="673.4,229.1 683.1,238.6 675.4,242.5" fill="#f39a10"/><polygon points="655.7,325.6 642.1,325.5 644.8,317.4" fill="#1a8fd4"/><polygon points="678.7,404.7 684.9,416.8 676.4,418.1" fill="#1a8fd4"/><polygon points="682.0,360.3 679.0,373.6 671.6,369.1" fill="#f39a10"/><polygon points="672.5,401.2 679.7,389.7 685.2,396.3" fill="#1a8fd4"/><polygon points="669.1,413.0 682.5,415.4 678.4,423.0" fill="#1a8fd4"/><polygon points="657.1,324.6 657.9,338.2 649.6,336.0" fill="#1a8fd4"/><polygon points="694.5,423.9 681.7,428.4 681.5,419.8" fill="#1a8fd4"/><polygon points="680.9,390.7 681.7,404.3 673.4,402.1" fill="#1a8fd4"/><polygon points="675.0,373.9 669.4,386.4 663.1,380.6" fill="#f39a10"/><polygon points="663.3,379.6 676.3,383.6 671.3,390.6" fill="#9b9b9b"/><polygon points="678.2,413.3 668.6,403.7 676.3,399.8" fill="#1a8fd4"/><polygon points="669.4,399.5 665.3,386.5 673.9,386.7" fill="#9b9b9b"/><polygon points="681.5,326.8 669.0,332.3 668.2,323.7" fill="#9b9b9b"/><polygon points="670.6,400.0 683.9,403.0 679.4,410.4" fill="#9b9b9b"/><polygon points="680.3,417.1 670.9,407.2 678.7,403.6" fill="#f39a10"/><polygon points="657.4,325.6 653.5,312.6 662.1,312.8" fill="#9b9b9b"/><polygon points="667.9,388.9 681.3,386.9 679.8,395.3" fill="#f39a10"/><polygon points="661.6,372.7 674.5,368.6 674.4,377.2" fill="#1a8fd4"/><polygon points="671.7,416.6 684.5,421.3 679.1,428.0" fill="#1a8fd4"/><polygon points="687.5,431.9 676.9,440.4 673.9,432.4" fill="#1a8fd4"/><polygon points="667.9,437.6 678.1,428.6 681.5,436.5" fill="#1a8fd4"/><polygon points="678.7,391.6 677.5,405.2 669.6,401.7" fill="#1a8fd4"/><polygon points="671.5,353.8 658.1,356.0 659.4,347.5" fill="#9b9b9b"/><polygon points="683.5,411.6 670.4,415.5 670.7,406.9" fill="#1a8fd4"/><polygon points="679.2,437.9 675.4,424.9 684.0,425.2" fill="#9b9b9b"/><polygon points="671.2,346.0 660.3,354.2 657.6,346.0" fill="#1a8fd4"/><polygon points="658.1,353.7 669.4,361.2 662.6,366.5" fill="#f39a10"/><polygon points="661.4,324.1 656.1,336.6 649.6,330.9" fill="#f39a10"/><polygon points="663.4,383.1 663.7,369.5 671.8,372.5" fill="#9b9b9b"/><polygon points="674.3,382.6 661.4,386.7 661.5,378.1" fill="#1a8fd4"/><polygon points="681.5,375.7 668.3,378.8 669.1,370.2" fill="#f39a10"/><polygon points="686.9,429.0 679.2,440.3 674.0,433.4" fill="#9b9b9b"/><polygon points="659.1,349.8 671.8,345.0 672.2,353.6" fill="#9b9b9b"/><polygon points="663.7,311.9 650.7,315.9 650.9,307.3" fill="#9b9b9b"/><polygon points="673.9,380.8 685.2,388.5 678.4,393.7" fill="#f39a10"/><polygon points="682.3,399.0 670.3,405.6 668.8,397.1" fill="#1a8fd4"/><polygon points="654.4,339.7 665.6,347.3 658.8,352.5" fill="#f39a10"/><polygon points="649.7,330.3 654.8,317.7 661.3,323.2" fill="#1a8fd4"/><polygon points="664.7,303.9 660.1,316.7 653.4,311.4" fill="#f39a10"/><polygon points="670.2,359.5 659.8,350.7 667.1,346.2" fill="#1a8fd4"/><polygon points="672.2,341.6 663.7,352.2 659.0,345.0" fill="#9b9b9b"/><polygon points="649.0,308.8 660.3,301.3 662.6,309.6" fill="#1a8fd4"/><polygon points="661.8,363.0 675.3,361.4 673.6,369.8" fill="#f39a10"/><polygon points="664.7,351.2 671.6,363.0 663.2,364.7" fill="#f39a10"/><polygon points="653.2,316.2 660.8,304.9 666.0,311.8" fill="#9b9b9b"/><polygon points="649.7,367.1 662.1,361.5 663.0,370.0" fill="#9b9b9b"/><polygon points="663.9,331.7 666.1,345.1 657.6,343.8" fill="#9b9b9b"/><polygon points="661.7,324.4 661.1,338.0 653.1,334.9" fill="#1a8fd4"/><polygon points="689.2,399.3 681.8,410.8 676.4,404.1" fill="#1a8fd4"/><polygon points="654.8,337.6 662.2,326.2 667.6,332.9" fill="#9b9b9b"/><polygon points="673.7,394.0 660.1,393.3 663.3,385.3" fill="#9b9b9b"/><polygon points="665.9,338.0 670.7,350.7 662.1,351.0" fill="#1a8fd4"/><polygon points="663.1,396.7 676.2,400.4 671.4,407.5" fill="#f39a10"/><polygon points="680.5,394.9 678.0,408.2 670.4,404.1" fill="#9b9b9b"/><polygon points="687.5,387.7 675.2,393.4 674.2,384.9" fill="#f39a10"/><polygon points="663.4,299.9 674.9,307.2 668.2,312.7" fill="#f39a10"/><polygon points="694.6,422.3 681.3,425.3 682.2,416.8" fill="#1a8fd4"/><polygon points="661.4,381.6 671.5,372.6 674.9,380.5" fill="#f39a10"/><polygon points="691.0,414.0 688.1,427.3 680.7,422.9" fill="#1a8fd4"/><polygon points="675.1,373.1 661.9,376.5 662.5,368.0" fill="#1a8fd4"/><polygon points="667.7,335.2 657.2,343.8 654.1,335.8" fill="#f39a10"/><polygon points="660.6,359.3 648.0,364.5 647.4,355.9" fill="#9b9b9b"/><polygon points="671.7,418.8 684.9,422.2 680.2,429.4" fill="#f39a10"/><polygon points="657.3,373.3 670.5,376.6 665.9,383.9" fill="#9b9b9b"/><polygon points="674.3,401.8 675.9,388.3 683.7,392.0" fill="#1a8fd4"/><polygon points="663.6,353.7 652.1,346.4 658.8,341.0" fill="#1a8fd4"/><polygon points="669.0,375.6 671.0,389.1 662.6,387.6" fill="#1a8fd4"/><polygon points="662.2,324.9 649.1,321.2 653.9,314.1" fill="#1a8fd4"/><polygon points="654.2,329.3 661.0,317.5 666.7,323.9" fill="#f39a10"/><polygon points="677.5,388.9 676.2,402.5 668.4,399.0" fill="#1a8fd4"/><polygon points="660.0,378.5 671.5,385.8 664.8,391.3" fill="#9b9b9b"/><polygon points="667.0,307.3 662.3,320.1 655.6,314.7" fill="#f39a10"/><polygon points="665.3,327.3 662.2,340.5 654.9,336.0" fill="#f39a10"/><polygon points="684.4,404.0 670.8,405.1 672.8,396.8" fill="#f39a10"/><polygon points="670.7,319.6 657.1,320.1 659.5,311.9" fill="#1a8fd4"/><polygon points="669.4,342.5 672.0,355.8 663.4,354.7" fill="#f39a10"/><polygon points="656.1,334.4 666.6,343.0 659.3,347.6" fill="#f39a10"/><polygon points="684.2,409.9 680.2,396.9 688.8,397.1" fill="#9b9b9b"/><polygon points="680.6,407.1 682.3,420.5 673.9,418.9" fill="#f39a10"/><polygon points="674.0,378.3 660.9,374.5 665.8,367.4" fill="#1a8fd4"/><polygon points="667.9,404.5 669.8,391.0 677.5,394.9" fill="#1a8fd4"/><polygon points="661.7,337.1 665.9,350.0 657.3,350.0" fill="#f39a10"/><polygon points="667.4,337.5 654.4,333.6 659.4,326.5" fill="#1a8fd4"/><polygon points="642.0,315.5 648.9,327.3 640.4,329.1" fill="#1a8fd4"/><polygon points="673.7,375.1 682.2,385.7 674.2,388.7" fill="#9b9b9b"/><polygon points="658.0,337.4 666.8,347.7 658.9,350.9" fill="#1a8fd4"/><polygon points="667.3,343.5 662.3,330.9 670.8,330.3" fill="#1a8fd4"/><polygon points="689.2,426.1 702.7,424.9 700.8,433.2" fill="#9b9b9b"/><polygon points="664.0,382.2 675.5,389.5 668.8,394.9" fill="#f39a10"/><polygon points="675.0,394.8 686.6,401.9 680.0,407.4" fill="#f39a10"/><polygon points="654.4,316.6 650.2,303.7 658.8,303.7" fill="#9b9b9b"/><polygon points="675.8,354.9 663.4,360.5 662.6,351.9" fill="#f39a10"/><polygon points="653.0,372.7 660.6,361.5 665.9,368.3" fill="#9b9b9b"/><polygon points="661.3,360.1 658.8,346.7 667.3,347.9" fill="#f39a10"/><polygon points="681.8,414.8 672.6,424.8 668.5,417.2" fill="#f39a10"/><polygon points="664.6,369.7 667.0,356.3 674.6,360.4" fill="#f39a10"/><polygon points="647.8,333.1 644.2,320.1 652.7,320.5" fill="#1a8fd4"/><polygon points="670.6,337.2 662.4,348.0 657.5,340.9" fill="#9b9b9b"/><polygon points="665.3,331.8 652.3,327.8 657.3,320.8" fill="#9b9b9b"/><polygon points="673.0,337.3 659.9,340.9 660.4,332.3" fill="#1a8fd4"/><polygon points="692.6,419.9 688.3,432.8 681.4,427.7" fill="#f39a10"/><polygon points="657.5,354.9 671.1,354.3 668.7,362.6" fill="#1a8fd4"/><polygon points="668.7,394.7 679.2,403.4 671.8,408.0" fill="#f39a10"/><polygon points="665.3,350.7 658.2,339.1 666.6,337.2" fill="#f39a10"/><polygon points="655.9,314.3 651.6,301.4 660.2,301.4" fill="#1a8fd4"/><polygon points="668.9,381.5 671.3,394.8 662.8,393.7" fill="#9b9b9b"/><polygon points="657.6,334.2 668.2,342.6 661.0,347.3" fill="#1a8fd4"/><polygon points="661.6,368.9 664.7,355.7 672.0,360.2" fill="#9b9b9b"/><polygon points="671.3,383.0 683.3,389.4 677.0,395.3" fill="#f39a10"/><polygon points="665.3,402.6 678.2,406.9 673.0,413.8" fill="#9b9b9b"/><polygon points="677.8,395.1 664.6,398.6 665.1,390.0" fill="#f39a10"/><polygon points="677.7,397.2 665.1,402.1 664.7,393.5" fill="#f39a10"/><polygon points="665.3,366.2 659.6,353.8 668.2,352.9" fill="#f39a10"/><polygon points="649.7,317.3 646.9,304.0 655.4,305.0" fill="#f39a10"/><polygon points="672.7,388.0 686.1,386.0 684.6,394.5" fill="#f39a10"/><polygon points="653.3,352.5 664.0,361.0 656.8,365.7" fill="#9b9b9b"/><polygon points="656.2,327.7 653.5,314.4 662.0,315.4" fill="#1a8fd4"/><polygon points="662.3,325.8 654.7,314.6 663.0,312.2" fill="#9b9b9b"/><polygon points="658.5,341.4 655.9,328.0 664.5,329.2" fill="#f39a10"/><polygon points="672.9,358.0 661.4,365.4 659.3,357.0" fill="#9b9b9b"/><polygon points="694.4,469.9 706.7,463.9 707.8,472.4" fill="#f39a10"/><polygon points="714.4,439.9 713.9,453.5 705.9,450.5" fill="#8a12e6"/><polygon points="688.0,440.8 698.2,449.8 690.8,454.1" fill="#f39a10"/><polygon points="713.2,459.9 700.3,455.7 705.4,448.8" fill="#8a12e6"/><polygon points="692.5,436.5 699.0,448.4 690.6,450.0" fill="#f39a10"/><polygon points="732.2,459.4 725.0,447.9 733.4,445.9" fill="#f39a10"/><polygon points="697.5,437.6 686.9,446.2 683.9,438.1" fill="#8a12e6"/><polygon points="699.5,455.0 713.0,456.2 709.6,464.1" fill="#f39a10"/><polygon points="683.3,457.2 676.5,445.4 685.0,443.7" fill="#f39a10"/><polygon points="677.3,464.1 685.2,453.0 690.3,460.0" fill="#f39a10"/><polygon points="711.2,475.5 697.9,478.4 698.8,469.8" fill="#f39a10"/><polygon points="697.8,439.2 703.4,451.6 694.9,452.5" fill="#f39a10"/><polygon points="704.9,477.4 692.2,472.7 697.6,466.0" fill="#f39a10"/><polygon points="709.8,462.6 703.9,450.4 712.4,449.3" fill="#f39a10"/><polygon points="698.8,454.1 690.7,465.0 685.8,458.0" fill="#f39a10"/><polygon points="689.5,448.9 689.0,462.5 680.9,459.4" fill="#f39a10"/><polygon points="721.3,456.6 719.5,443.1 728.0,444.7" fill="#f39a10"/><polygon points="690.0,448.6 693.1,461.8 684.5,461.0" fill="#1a8fd4"/><polygon points="686.3,433.2 691.1,420.4 697.7,425.8" fill="#f39a10"/><polygon points="709.2,455.7 699.0,464.7 695.6,456.8" fill="#f39a10"/><polygon points="693.1,448.4 706.7,447.6 704.5,455.9" fill="#f39a10"/><polygon points="683.3,440.9 689.4,453.0 680.9,454.3" fill="#1a8fd4"/><polygon points="685.4,428.6 698.7,431.8 694.1,439.1" fill="#8a12e6"/><polygon points="683.7,457.1 681.9,443.6 690.4,445.2" fill="#f39a10"/><polygon points="706.1,469.9 700.6,482.3 694.2,476.5" fill="#f39a10"/><polygon points="704.2,451.8 697.8,439.8 706.3,438.4" fill="#f39a10"/><polygon points="699.6,472.5 686.8,477.0 686.6,468.4" fill="#111"/><polygon points="684.0,436.4 696.6,441.5 691.0,448.0" fill="#1a8fd4"/><polygon points="686.1,440.9 681.6,428.1 690.2,427.9" fill="#1a8fd4"/><polygon points="693.0,459.7 680.8,453.6 686.9,447.5" fill="#111"/><polygon points="706.3,452.3 693.6,447.4 699.1,440.8" fill="#8a12e6"/><polygon points="702.1,463.3 707.0,450.6 713.7,456.1" fill="#f39a10"/><polygon points="712.8,458.3 709.4,445.1 717.9,445.7" fill="#f39a10"/><polygon points="700.3,448.3 701.8,461.8 693.4,460.0" fill="#f39a10"/><polygon points="712.5,469.0 700.0,463.6 705.8,457.2" fill="#8a12e6"/><polygon points="694.4,464.7 694.6,451.1 702.7,454.0" fill="#f39a10"/><polygon points="714.8,472.4 715.1,458.8 723.2,461.7" fill="#f39a10"/><polygon points="725.6,458.5 712.8,454.0 718.0,447.2" fill="#f39a10"/><polygon points="699.6,469.1 686.5,465.5 691.3,458.3" fill="#f39a10"/><polygon points="697.9,422.5 711.5,421.7 709.2,430.0" fill="#111"/><polygon points="691.4,443.3 697.8,455.2 689.3,456.7" fill="#1a8fd4"/><polygon points="694.6,440.6 683.4,432.8 690.4,427.7" fill="#f39a10"/><polygon points="704.9,465.8 691.3,465.9 694.0,457.7" fill="#f39a10"/><polygon points="680.0,429.2 693.4,430.9 689.7,438.7" fill="#f39a10"/><polygon points="696.5,445.6 707.1,454.2 699.8,458.8" fill="#f39a10"/><polygon points="710.1,454.2 702.4,465.5 697.2,458.6" fill="#1a8fd4"/><polygon points="711.7,462.1 700.2,469.3 698.2,461.0" fill="#f39a10"/><polygon points="692.8,478.6 698.9,466.4 704.9,472.5" fill="#111"/><polygon points="674.9,450.3 688.3,448.0 687.0,456.5" fill="#f39a10"/><polygon points="709.8,470.8 713.0,484.1 704.4,483.3" fill="#8a12e6"/><polygon points="714.0,453.1 726.6,458.2 721.0,464.7" fill="#f39a10"/><polygon points="700.0,441.5 686.5,440.0 690.1,432.2" fill="#f39a10"/><polygon points="689.7,470.0 685.2,457.2 693.8,457.0" fill="#f39a10"/><polygon points="685.1,467.6 698.5,465.3 697.3,473.8" fill="#f39a10"/><polygon points="696.8,445.9 700.0,459.1 691.4,458.3" fill="#f39a10"/><polygon points="690.7,449.7 695.6,462.4 687.0,462.8" fill="#1a8fd4"/><polygon points="717.6,442.9 713.3,455.9 706.4,450.7" fill="#f39a10"/><polygon points="710.4,438.7 721.7,446.4 714.8,451.6" fill="#f39a10"/><polygon points="711.1,451.8 705.3,464.1 699.1,458.2" fill="#8a12e6"/><polygon points="728.3,463.1 716.5,469.9 714.8,461.5" fill="#f39a10"/><polygon points="689.3,447.5 676.6,452.4 676.2,443.8" fill="#1a8fd4"/><polygon points="708.3,451.2 718.1,460.6 710.5,464.6" fill="#f39a10"/><polygon points="688.5,450.1 700.8,444.2 701.9,452.8" fill="#f39a10"/><polygon points="673.1,459.7 673.7,446.1 681.7,449.2" fill="#8a12e6"/><polygon points="688.5,462.9 700.2,456.1 702.0,464.5" fill="#f39a10"/><polygon points="666.1,447.3 678.0,454.0 671.6,459.7" fill="#f39a10"/><polygon points="697.7,464.9 710.0,459.0 711.1,467.5" fill="#f39a10"/><polygon points="679.5,454.1 684.4,441.4 691.0,446.8" fill="#111"/><polygon points="696.9,438.7 706.5,429.2 710.3,436.9" fill="#111"/><polygon points="690.1,451.3 677.6,446.1 683.2,439.6" fill="#f39a10"/><polygon points="696.1,461.4 709.6,459.4 708.1,467.9" fill="#f39a10"/><polygon points="687.5,455.9 701.0,454.5 699.2,462.9" fill="#f39a10"/><polygon points="696.5,457.6 707.6,449.7 710.0,458.0" fill="#8a12e6"/><polygon points="711.2,453.5 723.6,459.1 717.7,465.4" fill="#f39a10"/><polygon points="709.9,460.5 712.8,447.2 720.2,451.5" fill="#f39a10"/><polygon points="695.0,475.0 682.9,468.8 689.0,462.8" fill="#111"/><polygon points="685.3,479.1 677.3,468.1 685.5,465.5" fill="#f39a10"/><polygon points="691.2,471.4 678.0,474.7 678.7,466.1" fill="#8a12e6"/><polygon points="681.5,462.2 682.3,475.8 674.0,473.6" fill="#f39a10"/><polygon points="681.5,465.4 693.0,472.6 686.3,478.1" fill="#f39a10"/><polygon points="685.3,463.0 698.9,463.5 695.9,471.6" fill="#f39a10"/><polygon points="695.0,466.1 681.9,462.3 686.8,455.2" fill="#8a12e6"/><polygon points="667.4,465.3 680.9,464.2 678.9,472.5" fill="#111"/><polygon points="692.2,472.1 678.6,471.3 681.8,463.3" fill="#111"/><polygon points="671.1,472.1 674.1,458.9 681.4,463.3" fill="#8a12e6"/><polygon points="679.4,466.8 672.0,455.4 680.4,453.3" fill="#8a12e6"/><polygon points="682.6,467.2 671.4,459.4 678.3,454.2" fill="#111"/><polygon points="675.9,464.7 687.7,471.6 681.2,477.3" fill="#8a12e6"/><polygon points="688.6,467.9 677.1,475.0 675.1,466.7" fill="#111"/><polygon points="693.1,476.3 679.5,477.3 681.6,468.9" fill="#111"/><polygon points="699.0,482.4 686.2,487.0 686.0,478.4" fill="#f39a10"/><polygon points="706.2,485.1 694.0,479.1 700.1,472.9" fill="#f39a10"/><polygon points="690.7,481.1 677.1,479.8 680.6,472.0" fill="#f39a10"/><polygon points="681.5,485.1 678.8,471.7 687.3,472.8" fill="#f39a10"/><polygon points="689.7,474.1 684.3,461.6 692.9,460.9" fill="#f39a10"/><polygon points="690.7,471.4 700.4,480.9 692.7,484.8" fill="#f39a10"/><polygon points="683.1,471.4 696.6,472.9 693.0,480.7" fill="#f39a10"/><polygon points="694.2,477.9 707.3,481.5 702.5,488.6" fill="#f39a10"/><polygon points="693.3,467.8 693.4,481.4 685.2,478.7" fill="#f39a10"/><polygon points="694.8,486.9 687.3,475.6 695.6,473.3" fill="#111"/><polygon points="693.9,487.5 701.1,475.9 706.5,482.6" fill="#f39a10"/><polygon points="696.5,476.5 704.0,487.9 695.6,490.0" fill="#111"/><polygon points="685.7,487.4 681.9,474.3 690.5,474.7" fill="#111"/><polygon points="698.0,513.5 685.7,507.7 691.6,501.5" fill="#f39a10"/><polygon points="691.8,500.9 700.4,511.3 692.4,514.4" fill="#1a8fd4"/><polygon points="682.7,503.2 696.0,506.2 691.5,513.5" fill="#f39a10"/><polygon points="692.2,497.6 691.8,511.2 683.8,508.3" fill="#1a8fd4"/><polygon points="687.9,503.2 696.7,513.6 688.7,516.8" fill="#f39a10"/><polygon points="708.0,520.8 701.4,508.9 709.8,507.3" fill="#f39a10"/><polygon points="715.9,552.1 709.9,564.3 703.8,558.3" fill="#9b9b9b"/><polygon points="700.6,559.8 710.9,568.7 703.5,573.1" fill="#9b9b9b"/><polygon points="706.4,595.2 718.1,588.4 719.9,596.8" fill="#f39a10"/><polygon points="720.3,536.7 718.1,550.1 710.5,546.1" fill="#9b9b9b"/><polygon points="702.9,570.2 714.5,577.3 707.9,582.9" fill="#9b9b9b"/><polygon points="687.6,538.4 700.7,541.8 696.0,549.0" fill="#9b9b9b"/><polygon points="703.5,569.9 709.9,581.9 701.5,583.4" fill="#f39a10"/><polygon points="705.6,550.6 698.2,562.1 692.9,555.3" fill="#9b9b9b"/><polygon points="709.2,544.2 699.4,553.6 695.7,545.8" fill="#9b9b9b"/><polygon points="715.3,564.1 702.0,567.0 702.9,558.5" fill="#9b9b9b"/><polygon points="695.9,555.5 698.0,569.0 689.6,567.6" fill="#9b9b9b"/><polygon points="698.8,581.7 693.8,569.1 702.4,568.6" fill="#9b9b9b"/><polygon points="718.8,547.3 713.6,559.9 707.1,554.2" fill="#f39a10"/><polygon points="723.4,588.4 733.0,598.0 725.4,601.9" fill="#19e619"/><polygon points="713.8,565.8 708.2,578.2 701.9,572.4" fill="#9b9b9b"/><polygon points="714.0,577.5 718.5,590.3 709.9,590.4" fill="#9b9b9b"/><polygon points="712.9,604.5 701.4,597.3 708.0,591.9" fill="#9b9b9b"/><polygon points="714.6,555.8 707.1,567.1 701.8,560.4" fill="#9b9b9b"/><polygon points="710.1,573.1 723.7,573.6 720.7,581.6" fill="#f39a10"/><polygon points="707.2,558.4 693.7,559.6 695.6,551.3" fill="#f39a10"/><polygon points="696.2,551.7 706.7,560.4 699.3,564.9" fill="#9b9b9b"/><polygon points="693.1,555.8 690.6,542.4 699.1,543.6" fill="#9b9b9b"/><polygon points="703.5,546.4 692.7,554.7 689.9,546.6" fill="#9b9b9b"/><polygon points="699.2,535.6 712.3,532.2 711.7,540.8" fill="#f39a10"/><polygon points="699.0,549.4 704.1,536.8 710.6,542.4" fill="#9b9b9b"/><polygon points="709.3,575.0 712.8,588.1 704.2,587.6" fill="#9b9b9b"/><polygon points="698.4,590.5 687.7,582.0 694.9,577.3" fill="#f39a10"/><polygon points="726.5,582.9 713.1,584.6 714.8,576.2" fill="#9b9b9b"/><polygon points="712.9,571.0 709.6,584.2 702.4,579.5" fill="#f39a10"/><polygon points="708.2,562.3 694.9,565.3 695.8,556.7" fill="#19e619"/><polygon points="695.2,538.7 696.4,552.2 688.0,550.3" fill="#9b9b9b"/><polygon points="689.0,593.3 686.3,579.9 694.9,581.0" fill="#9b9b9b"/><polygon points="696.7,559.0 695.0,572.5 687.2,568.8" fill="#f39a10"/><polygon points="692.9,556.4 706.3,554.6 704.8,563.0" fill="#9b9b9b"/><polygon points="715.2,587.9 728.1,583.7 728.1,592.3" fill="#1a8fd4"/><polygon points="713.7,541.2 705.3,530.5 713.5,527.6" fill="#f39a10"/><polygon points="686.9,530.8 680.1,542.5 674.4,536.1" fill="#f39a10"/><polygon points="713.0,542.2 708.6,555.1 701.8,549.9" fill="#9b9b9b"/><polygon points="705.7,541.8 708.4,555.1 699.9,554.0" fill="#9b9b9b"/><polygon points="703.6,603.3 710.5,591.6 716.2,598.1" fill="#1a8fd4"/><polygon points="687.5,569.1 698.6,561.2 701.1,569.4" fill="#9b9b9b"/><polygon points="713.6,539.0 700.2,541.4 701.5,532.9" fill="#9b9b9b"/><polygon points="691.5,575.1 687.2,562.2 695.8,562.2" fill="#1a8fd4"/><polygon points="703.2,558.6 702.3,545.0 710.6,547.2" fill="#9b9b9b"/><polygon points="710.3,543.0 702.6,554.2 697.4,547.4" fill="#9b9b9b"/><polygon points="699.8,566.6 708.7,576.9 700.7,580.2" fill="#9b9b9b"/><polygon points="690.8,567.3 694.6,554.2 701.7,559.2" fill="#9b9b9b"/><polygon points="717.3,570.1 730.8,568.0 729.3,576.5" fill="#9b9b9b"/><polygon points="698.2,551.9 711.4,555.0 706.9,562.3" fill="#9b9b9b"/><polygon points="703.9,579.7 717.4,580.9 714.0,588.8" fill="#9b9b9b"/><polygon points="705.7,599.8 692.2,597.8 696.1,590.2" fill="#9b9b9b"/><polygon points="687.8,546.8 696.6,536.5 701.0,543.8" fill="#9b9b9b"/><polygon points="687.5,540.9 685.8,527.5 694.2,529.1" fill="#9b9b9b"/><polygon points="695.0,536.9 682.9,543.2 681.6,534.7" fill="#9b9b9b"/><polygon points="697.2,560.4 710.6,558.3 709.2,566.8" fill="#9b9b9b"/><polygon points="702.1,595.7 703.5,609.2 695.1,607.4" fill="#9b9b9b"/><polygon points="688.8,574.2 698.9,583.3 691.4,587.6" fill="#9b9b9b"/><polygon points="687.8,584.7 693.6,572.4 699.9,578.3" fill="#9b9b9b"/><polygon points="688.3,544.2 691.4,557.4 682.9,556.7" fill="#f39a10"/><polygon points="696.5,553.0 704.2,541.8 709.4,548.7" fill="#9b9b9b"/><polygon points="696.3,533.2 703.8,544.5 695.5,546.7" fill="#1a8fd4"/><polygon points="710.6,604.0 709.1,590.5 717.5,592.3" fill="#1a8fd4"/><polygon points="694.9,550.4 691.6,537.2 700.2,537.8" fill="#9b9b9b"/><polygon points="724.8,591.3 712.1,596.1 711.8,587.5" fill="#9b9b9b"/><polygon points="698.6,540.7 685.1,541.9 687.1,533.5" fill="#f39a10"/><polygon points="706.2,563.0 695.2,571.0 692.6,562.8" fill="#9b9b9b"/><polygon points="694.5,578.8 705.9,586.1 699.2,591.5" fill="#f39a10"/><polygon points="691.3,555.8 678.6,560.8 678.2,552.2" fill="#9b9b9b"/><polygon points="698.3,554.9 697.9,541.3 706.1,543.7" fill="#f39a10"/><polygon points="691.1,602.3 703.7,607.4 698.2,614.0" fill="#9b9b9b"/><polygon points="716.7,551.0 703.3,548.9 707.2,541.3" fill="#f39a10"/><polygon points="695.6,549.9 709.0,547.4 707.8,555.9" fill="#9b9b9b"/><polygon points="688.9,549.8 693.5,537.0 700.3,542.3" fill="#9b9b9b"/><polygon points="700.0,562.6 687.2,558.2 692.4,551.3" fill="#f39a10"/><polygon points="704.5,587.8 692.4,594.1 691.1,585.6" fill="#f39a10"/><polygon points="703.8,604.3 712.9,594.2 717.1,601.7" fill="#9b9b9b"/><polygon points="687.6,548.3 693.0,535.8 699.4,541.6" fill="#9b9b9b"/><polygon points="719.0,592.1 705.7,594.9 706.7,586.3" fill="#f39a10"/><polygon points="690.7,573.1 701.0,582.0 693.6,586.4" fill="#19e619"/><polygon points="694.0,547.4 696.9,534.1 704.3,538.6" fill="#f39a10"/><polygon points="707.1,563.7 699.3,574.8 694.2,567.9" fill="#1a8fd4"/><polygon points="710.6,599.3 698.6,592.9 704.9,587.0" fill="#9b9b9b"/><polygon points="719.7,564.2 706.1,565.4 708.2,557.0" fill="#f39a10"/><polygon points="698.5,564.1 686.7,557.3 693.1,551.6" fill="#1a8fd4"/><polygon points="712.7,559.7 700.7,553.1 707.0,547.3" fill="#f39a10"/><polygon points="680.9,562.5 683.0,549.1 690.7,553.0" fill="#9b9b9b"/><polygon points="692.7,571.6 706.2,573.3 702.4,581.0" fill="#9b9b9b"/><polygon points="708.8,547.1 716.3,558.4 708.0,560.6" fill="#9b9b9b"/><polygon points="691.2,541.2 702.6,548.5 696.0,553.9" fill="#9b9b9b"/><polygon points="723.6,600.0 710.0,600.1 712.7,591.9" fill="#f39a10"/><polygon points="701.4,577.9 700.4,564.4 708.7,566.4" fill="#9b9b9b"/><polygon points="705.6,613.9 696.2,604.1 704.0,600.4" fill="#19e619"/><polygon points="695.9,572.0 699.5,558.9 706.6,563.8" fill="#9b9b9b"/><polygon points="719.1,554.8 706.8,560.7 705.7,552.2" fill="#f39a10"/><polygon points="700.7,568.5 689.7,560.6 696.7,555.5" fill="#f39a10"/><polygon points="687.9,583.2 682.5,570.7 691.1,570.0" fill="#9b9b9b"/><polygon points="688.7,559.4 699.8,567.2 692.8,572.3" fill="#1a8fd4"/><polygon points="704.6,572.0 695.3,581.9 691.2,574.4" fill="#9b9b9b"/><polygon points="679.6,553.5 693.1,555.6 689.1,563.2" fill="#9b9b9b"/><polygon points="708.7,563.2 722.2,564.8 718.5,572.6" fill="#9b9b9b"/><polygon points="716.7,603.1 723.2,591.2 729.0,597.5" fill="#9b9b9b"/><polygon points="708.3,575.9 697.8,567.1 705.2,562.6" fill="#9b9b9b"/><polygon points="686.8,542.9 691.2,530.0 698.0,535.2" fill="#1a8fd4"/><polygon points="704.6,558.6 715.1,550.0 718.2,558.0" fill="#9b9b9b"/><polygon points="702.7,535.2 689.1,534.7 692.1,526.7" fill="#9b9b9b"/><polygon points="707.7,587.1 710.7,573.8 718.0,578.2" fill="#9b9b9b"/><polygon points="711.0,577.0 701.4,586.7 697.5,579.0" fill="#9b9b9b"/><polygon points="689.5,598.3 686.4,585.1 695.0,585.8" fill="#f39a10"/><polygon points="694.5,549.6 684.0,541.0 691.3,536.4" fill="#9b9b9b"/><polygon points="706.5,532.1 708.4,545.6 699.9,544.0" fill="#9b9b9b"/><polygon points="709.1,543.1 704.0,530.5 712.6,530.0" fill="#f39a10"/><polygon points="688.2,561.1 691.5,574.3 682.9,573.6" fill="#19e619"/><polygon points="717.8,582.0 710.3,593.3 705.0,586.6" fill="#9b9b9b"/><polygon points="702.5,543.2 698.5,556.1 691.5,551.1" fill="#19e619"/><polygon points="713.9,588.9 712.9,602.4 705.0,599.1" fill="#1a8fd4"/><polygon points="692.0,540.2 703.5,547.4 696.9,552.8" fill="#9b9b9b"/><polygon points="704.5,581.4 695.7,571.0 703.7,567.8" fill="#9b9b9b"/><polygon points="697.5,572.4 710.3,576.8 705.1,583.6" fill="#1a8fd4"/><polygon points="708.9,556.9 695.3,556.7 698.1,548.6" fill="#f39a10"/><polygon points="720.1,573.4 707.4,578.3 707.0,569.7" fill="#9b9b9b"/><polygon points="706.7,624.4 696.4,615.6 703.7,611.2" fill="#f39a10"/><polygon points="708.2,612.1 705.1,625.3 697.8,620.8" fill="#f39a10"/><polygon points="711.1,607.2 700.8,616.1 697.5,608.2" fill="#9b9b9b"/><polygon points="704.8,642.3 691.5,639.5 695.9,632.1" fill="#f39a10"/><polygon points="712.7,643.4 701.8,635.3 708.8,630.4" fill="#1a8fd4"/><polygon points="711.2,614.3 711.5,600.7 719.6,603.5" fill="#1a8fd4"/><polygon points="719.7,620.5 706.2,622.0 708.0,613.5" fill="#19e619"/><polygon points="706.7,611.0 720.3,611.3 717.4,619.4" fill="#1a8fd4"/><polygon points="711.2,606.7 707.7,619.9 700.5,615.1" fill="#f39a10"/><polygon points="708.1,621.3 701.3,609.6 709.7,607.8" fill="#19e619"/><polygon points="705.5,628.0 697.0,638.6 692.3,631.4" fill="#f39a10"/><polygon points="710.9,618.9 697.3,619.3 699.8,611.1" fill="#f39a10"/><polygon points="706.0,619.7 693.8,625.8 692.6,617.3" fill="#f39a10"/><polygon points="706.5,627.3 710.2,614.2 717.3,619.1" fill="#1a8fd4"/><polygon points="709.6,628.0 708.2,614.5 716.6,616.4" fill="#1a8fd4"/><polygon points="694.7,621.7 704.4,612.2 708.2,619.9" fill="#f39a10"/><polygon points="698.0,608.0 710.5,602.6 711.2,611.1" fill="#1a8fd4"/><polygon points="718.2,636.7 704.6,635.9 707.8,627.9" fill="#f39a10"/><polygon points="699.2,620.9 709.9,612.5 712.8,620.6" fill="#f39a10"/><polygon points="705.5,625.3 704.1,638.9 696.3,635.3" fill="#f39a10"/><polygon points="697.0,637.5 710.1,633.9 709.7,642.5" fill="#e6f0c0"/><polygon points="710.1,605.7 704.0,617.8 697.9,611.7" fill="#1a8fd4"/><polygon points="706.0,634.0 693.2,629.4 698.5,622.6" fill="#1a8fd4"/><polygon points="690.5,625.6 699.5,635.8 691.5,639.1" fill="#f39a10"/><polygon points="700.4,613.8 710.3,604.4 713.9,612.2" fill="#1a8fd4"/><polygon points="706.9,627.1 694.1,631.5 694.0,622.9" fill="#19e619"/><polygon points="702.0,629.5 712.8,637.9 705.6,642.6" fill="#1a8fd4"/><polygon points="697.1,609.2 708.7,602.0 710.7,610.4" fill="#f39a10"/><polygon points="705.7,611.8 710.5,599.0 717.2,604.4" fill="#f39a10"/><polygon points="702.2,626.8 702.3,613.2 710.4,616.0" fill="#f39a10"/><polygon points="696.9,632.9 698.1,619.3 706.0,622.7" fill="#f39a10"/><polygon points="691.4,615.2 700.6,605.2 704.7,612.7" fill="#9b9b9b"/><polygon points="708.7,619.2 703.7,631.8 697.1,626.3" fill="#f39a10"/><polygon points="693.9,622.5 700.2,634.5 691.7,635.9" fill="#f39a10"/><polygon points="685.2,624.2 698.8,623.3 696.6,631.6" fill="#f39a10"/><polygon points="717.5,619.0 707.4,610.0 714.8,605.7" fill="#f39a10"/><polygon points="704.7,631.1 691.2,632.8 692.9,624.4" fill="#f39a10"/><polygon points="704.6,610.6 715.1,601.9 718.2,609.9" fill="#1a8fd4"/><polygon points="699.9,637.7 696.3,624.6 704.9,625.1" fill="#19e619"/><polygon points="705.7,636.6 700.6,624.0 709.2,623.4" fill="#f39a10"/><polygon points="721.4,612.3 708.2,615.7 708.8,607.1" fill="#e6f0c0"/><polygon points="719.8,625.2 706.7,628.7 707.2,620.1" fill="#e6f0c0"/><polygon points="704.6,643.0 691.8,638.3 697.2,631.6" fill="#f39a10"/><polygon points="699.1,622.1 709.3,613.1 712.7,621.0" fill="#f39a10"/><polygon points="716.6,621.6 704.1,626.9 703.4,618.3" fill="#19e619"/><polygon points="691.6,614.6 702.4,606.4 705.2,614.5" fill="#1a8fd4"/><polygon points="701.0,615.2 704.0,601.9 711.4,606.4" fill="#f39a10"/><polygon points="695.6,612.1 708.7,608.6 708.2,617.2" fill="#9b9b9b"/><polygon points="698.9,616.0 702.8,603.1 709.8,608.0" fill="#f39a10"/><polygon points="698.5,623.7 708.9,614.9 712.1,622.9" fill="#f39a10"/><polygon points="702.0,601.3 690.7,608.9 688.4,600.7" fill="#19e619"/><polygon points="707.4,613.2 699.2,602.4 707.4,599.6" fill="#1a8fd4"/><polygon points="712.0,615.6 703.6,604.9 711.7,602.0" fill="#1a8fd4"/><polygon points="702.5,616.8 705.9,629.9 697.3,629.3" fill="#f39a10"/><polygon points="711.1,635.0 708.3,648.4 700.8,644.0" fill="#19e619"/><polygon points="704.0,636.4 711.6,625.1 716.9,631.9" fill="#f39a10"/><polygon points="706.4,635.5 696.0,644.2 692.8,636.2" fill="#19e619"/><polygon points="712.0,630.3 718.3,618.3 724.3,624.5" fill="#1a8fd4"/><polygon points="695.1,642.2 703.2,631.3 708.1,638.3" fill="#1a8fd4"/><polygon points="699.4,602.8 712.6,606.1 708.0,613.4" fill="#9b9b9b"/><polygon points="701.8,607.4 709.0,618.9 700.7,620.9" fill="#f39a10"/><polygon points="703.9,622.2 717.5,620.8 715.6,629.2" fill="#f39a10"/><polygon points="701.3,638.1 689.3,631.7 695.5,625.8" fill="#1a8fd4"/><polygon points="698.2,633.9 698.1,620.3 706.3,623.1" fill="#f39a10"/><polygon points="715.5,617.3 702.9,622.4 702.4,613.9" fill="#1a8fd4"/><polygon points="694.0,598.5 704.8,606.8 697.7,611.6" fill="#9b9b9b"/><polygon points="700.6,643.8 690.8,634.4 698.4,630.4" fill="#19e619"/><polygon points="716.1,627.7 708.8,639.2 703.4,632.5" fill="#f39a10"/><polygon points="707.6,619.3 699.0,608.7 707.1,605.7" fill="#f39a10"/><polygon points="702.6,646.7 696.7,634.5 705.2,633.4" fill="#19e619"/><polygon points="689.3,638.7 693.4,651.7 684.8,651.5" fill="#1a8fd4"/><polygon points="717.0,646.9 709.5,658.3 704.2,651.6" fill="#ee1c25"/><polygon points="680.2,660.1 677.1,646.8 685.6,647.6" fill="#9b9b9b"/><polygon points="689.5,646.8 700.4,655.0 693.3,659.8" fill="#9b9b9b"/><polygon points="689.5,633.8 693.5,646.8 684.9,646.6" fill="#f39a10"/><polygon points="708.3,652.8 705.4,666.1 698.0,661.7" fill="#111"/><polygon points="692.5,661.6 683.1,651.8 690.8,648.1" fill="#111"/><polygon points="695.9,646.4 703.1,657.9 694.8,659.9" fill="#ee1c25"/><polygon points="692.4,656.1 704.4,649.7 705.9,658.2" fill="#9b9b9b"/><polygon points="688.4,645.3 696.3,656.4 688.1,658.9" fill="#ee1c25"/><polygon points="701.5,658.9 687.9,659.0 690.5,650.9" fill="#9b9b9b"/><polygon points="700.5,646.5 688.6,652.9 687.1,644.5" fill="#9b9b9b"/><polygon points="710.1,651.3 702.4,662.5 697.2,655.7" fill="#9b9b9b"/><polygon points="691.1,670.7 689.3,657.2 697.8,658.8" fill="#1a8fd4"/><polygon points="705.1,656.8 692.0,660.2 692.6,651.6" fill="#ee1c25"/><polygon points="698.1,642.2 686.2,648.7 684.6,640.3" fill="#9b9b9b"/><polygon points="713.9,654.7 703.6,663.6 700.3,655.7" fill="#9b9b9b"/><polygon points="709.4,653.6 697.3,659.7 696.1,651.2" fill="#111"/><polygon points="690.7,656.4 703.2,651.0 703.9,659.5" fill="#9b9b9b"/><polygon points="696.4,664.9 710.0,664.8 707.3,673.0" fill="#9b9b9b"/><polygon points="678.9,655.5 685.1,643.4 691.1,649.5" fill="#9b9b9b"/><polygon points="705.1,672.0 704.5,658.4 712.8,660.8" fill="#ee1c25"/><polygon points="707.8,666.8 708.9,653.3 716.8,656.6" fill="#9b9b9b"/><polygon points="713.6,656.3 702.8,648.1 709.9,643.2" fill="#9b9b9b"/><polygon points="687.4,630.0 690.4,643.3 681.9,642.4" fill="#9b9b9b"/><polygon points="704.5,658.1 694.9,648.5 702.5,644.6" fill="#9b9b9b"/><polygon points="708.7,660.7 709.7,647.1 717.6,650.5" fill="#9b9b9b"/><polygon points="704.0,653.9 717.6,654.1 714.7,662.2" fill="#1a8fd4"/><polygon points="696.4,653.8 709.8,655.8 705.9,663.5" fill="#9b9b9b"/><polygon points="675.7,653.3 687.6,646.8 689.1,655.2" fill="#1a8fd4"/><polygon points="690.6,632.1 686.5,645.1 679.6,640.0" fill="#1a8fd4"/><polygon points="707.0,650.9 694.0,654.9 694.2,646.3" fill="#9b9b9b"/><polygon points="687.9,641.8 690.4,655.1 681.9,654.0" fill="#111"/><polygon points="711.0,662.2 706.1,674.9 699.4,669.4" fill="#111"/><polygon points="714.6,648.6 706.7,659.6 701.6,652.7" fill="#9b9b9b"/><polygon points="709.6,659.9 712.7,646.6 720.0,651.2" fill="#9b9b9b"/><polygon points="684.8,646.2 693.0,657.0 684.8,659.8" fill="#f39a10"/><polygon points="676.3,640.7 688.5,646.6 682.5,652.8" fill="#111"/><polygon points="711.3,647.1 709.3,660.6 701.7,656.7" fill="#9b9b9b"/><polygon points="696.9,649.6 703.8,661.4 695.3,663.1" fill="#111"/><polygon points="704.4,665.4 693.0,658.0 699.7,652.6" fill="#111"/><polygon points="706.1,666.5 704.1,653.0 712.6,654.6" fill="#1a8fd4"/><polygon points="687.1,656.1 690.3,642.9 697.6,647.4" fill="#9b9b9b"/><polygon points="691.0,645.8 677.7,643.2 681.9,635.7" fill="#111"/><polygon points="705.5,648.9 692.0,647.8 695.4,639.9" fill="#1a8fd4"/><polygon points="692.6,659.8 685.2,648.4 693.5,646.2" fill="#9b9b9b"/><polygon points="706.4,664.5 712.9,652.5 718.7,658.8" fill="#9b9b9b"/><polygon points="706.3,659.3 702.0,646.4 710.6,646.4" fill="#9b9b9b"/><polygon points="691.7,635.9 696.6,648.6 688.0,649.0" fill="#9b9b9b"/><polygon points="671.8,652.1 685.2,649.8 683.9,658.3" fill="#9b9b9b"/><polygon points="707.0,688.2 694.4,683.1 700.0,676.6" fill="#f39a10"/><polygon points="703.9,676.7 713.8,667.4 717.4,675.2" fill="#f39a10"/><polygon points="686.8,673.0 699.4,667.8 700.0,676.4" fill="#1a8fd4"/><polygon points="708.7,683.9 695.4,681.1 699.7,673.6" fill="#9b9b9b"/><polygon points="695.3,679.9 707.1,686.6 700.7,692.4" fill="#1a8fd4"/><polygon points="690.5,677.9 695.1,690.7 686.5,690.9" fill="#f39a10"/><polygon points="707.5,661.4 711.2,674.5 702.6,674.1" fill="#f39a10"/><polygon points="693.4,683.3 702.9,693.1 695.1,696.8" fill="#1a8fd4"/><polygon points="714.8,686.0 701.2,685.9 703.9,677.8" fill="#f39a10"/><polygon points="709.0,667.2 707.1,680.6 699.4,676.8" fill="#1a8fd4"/><polygon points="695.4,675.7 698.3,662.4 705.7,666.8" fill="#f39a10"/><polygon points="695.1,674.7 707.0,668.2 708.6,676.6" fill="#9b9b9b"/><polygon points="715.1,698.3 701.6,696.8 705.2,689.0" fill="#9b9b9b"/><polygon points="708.5,675.7 714.7,663.6 720.7,669.7" fill="#f39a10"/><polygon points="709.6,669.7 697.8,676.4 696.1,668.0" fill="#f39a10"/><polygon points="716.3,674.8 705.6,683.1 702.7,675.0" fill="#f39a10"/><polygon points="708.0,696.0 712.2,683.1 719.1,688.2" fill="#f39a10"/><polygon points="705.2,668.6 717.0,661.8 718.7,670.3" fill="#1a8fd4"/><polygon points="694.0,670.1 692.8,656.6 701.1,658.5" fill="#1a8fd4"/><polygon points="700.8,692.8 687.4,691.0 691.1,683.3" fill="#f39a10"/><polygon points="686.3,693.2 694.1,682.1 699.2,689.0" fill="#f39a10"/><polygon points="698.3,672.0 710.9,677.2 705.3,683.7" fill="#f39a10"/><polygon points="693.4,693.4 699.5,681.3 705.6,687.4" fill="#f39a10"/><polygon points="695.3,666.9 704.1,677.3 696.1,680.5" fill="#1a8fd4"/><polygon points="700.0,685.4 709.7,695.0 702.0,698.9" fill="#f39a10"/><polygon points="714.3,678.8 705.9,689.5 701.2,682.3" fill="#1a8fd4"/><polygon points="713.6,659.9 706.2,671.3 700.9,664.6" fill="#f39a10"/><polygon points="720.0,695.6 706.9,692.0 711.7,684.9" fill="#9b9b9b"/><polygon points="704.7,691.8 713.2,681.1 717.9,688.3" fill="#f39a10"/><polygon points="693.7,679.1 707.2,680.2 703.9,688.1" fill="#1a8fd4"/><polygon points="708.2,679.3 721.6,677.2 720.2,685.7" fill="#f39a10"/><polygon points="706.7,681.3 707.4,667.7 715.4,670.9" fill="#9b9b9b"/><polygon points="694.6,668.7 688.0,680.6 682.2,674.3" fill="#1a8fd4"/><polygon points="704.7,658.9 696.8,669.9 691.8,662.9" fill="#1a8fd4"/><polygon points="699.2,684.4 712.3,680.7 711.9,689.3" fill="#9b9b9b"/><polygon points="709.1,674.5 708.4,660.9 716.7,663.3" fill="#f39a10"/><polygon points="715.4,671.2 702.2,674.7 702.7,666.1" fill="#f39a10"/><polygon points="703.1,690.7 701.2,677.2 709.7,678.8" fill="#f39a10"/><polygon points="695.5,680.8 686.9,670.4 694.9,667.3" fill="#f39a10"/><polygon points="708.3,699.8 700.9,688.3 709.2,686.2" fill="#9b9b9b"/><polygon points="725.4,670.2 720.7,683.0 714.0,677.6" fill="#f39a10"/><polygon points="706.0,693.4 715.5,683.7 719.4,691.3" fill="#9b9b9b"/><polygon points="707.5,682.7 708.6,669.1 716.5,672.5" fill="#f39a10"/><polygon points="721.6,671.5 723.3,684.9 714.9,683.3" fill="#f39a10"/><polygon points="707.8,663.4 695.2,668.4 694.7,659.8" fill="#9b9b9b"/><polygon points="710.7,677.4 697.2,677.6 699.7,669.4" fill="#1a8fd4"/><polygon points="707.0,690.0 712.8,702.4 704.3,703.4" fill="#f39a10"/><polygon points="687.3,678.1 695.1,689.3 686.9,691.7" fill="#1a8fd4"/><polygon points="717.0,670.2 703.5,671.8 705.2,663.4" fill="#1a8fd4"/><polygon points="700.1,676.4 686.5,674.9 690.2,667.1" fill="#f39a10"/><polygon points="714.0,682.3 702.5,689.6 700.4,681.2" fill="#9b9b9b"/><polygon points="712.5,658.8 712.9,672.4 704.7,669.9" fill="#1a8fd4"/><polygon points="698.9,682.4 688.9,691.6 685.4,683.8" fill="#9b9b9b"/><polygon points="701.4,690.7 715.0,691.0 712.1,699.1" fill="#f39a10"/><polygon points="712.9,663.9 706.1,675.7 700.4,669.3" fill="#f39a10"/><polygon points="702.6,680.5 695.5,668.8 703.9,666.9" fill="#f39a10"/><polygon points="712.8,680.9 699.6,677.6 704.2,670.4" fill="#9b9b9b"/><polygon points="696.2,699.1 699.1,685.8 706.5,690.2" fill="#f39a10"/><polygon points="696.0,661.8 697.1,675.3 688.8,673.3" fill="#f39a10"/><polygon points="699.5,681.5 711.7,675.5 712.9,684.0" fill="#f39a10"/><polygon points="678.2,680.7 677.1,694.2 669.1,690.8" fill="#8a12e6"/><polygon points="679.8,673.7 683.9,686.7 675.3,686.5" fill="#10108a"/><polygon points="671.6,702.7 678.3,690.9 684.0,697.3" fill="#9b9b9b"/><polygon points="687.7,684.9 695.3,696.2 687.0,698.4" fill="#1a8fd4"/><polygon points="668.1,688.5 681.0,692.9 675.8,699.8" fill="#9b9b9b"/><polygon points="700.1,695.9 703.1,709.1 694.6,708.3" fill="#9b9b9b"/><polygon points="687.4,690.6 676.7,698.9 673.8,690.8" fill="#9b9b9b"/><polygon points="674.9,682.2 678.4,695.4 669.8,694.8" fill="#f39a10"/><polygon points="684.1,717.6 683.5,704.1 691.8,706.4" fill="#1a8fd4"/><polygon points="690.3,708.8 679.2,700.9 686.1,695.9" fill="#f39a10"/><polygon points="681.5,713.3 669.6,706.7 676.0,700.9" fill="#10108a"/><polygon points="672.1,686.9 683.2,694.7 676.3,699.9" fill="#9b9b9b"/><polygon points="680.7,714.1 685.5,701.3 692.2,706.7" fill="#9b9b9b"/><polygon points="697.5,695.7 702.5,708.3 693.9,708.8" fill="#10108a"/><polygon points="702.2,689.1 699.2,702.3 691.8,697.9" fill="#9b9b9b"/><polygon points="686.1,694.5 696.7,686.0 699.7,694.1" fill="#10108a"/><polygon points="679.6,701.1 679.4,687.5 687.6,690.1" fill="#1a8fd4"/><polygon points="680.6,702.7 677.1,689.5 685.7,690.1" fill="#1a8fd4"/><polygon points="696.3,697.7 683.9,703.3 683.1,694.7" fill="#10108a"/><polygon points="694.5,705.0 683.1,697.6 689.8,692.2" fill="#9b9b9b"/><polygon points="688.6,695.5 686.8,708.9 679.1,705.2" fill="#8a12e6"/><polygon points="699.3,707.0 686.2,710.3 686.8,701.7" fill="#f39a10"/><polygon points="690.3,718.0 687.8,704.6 696.3,705.8" fill="#8a12e6"/><polygon points="684.7,704.1 682.3,690.7 690.8,691.9" fill="#8a12e6"/><polygon points="695.5,694.6 682.9,699.8 682.3,691.2" fill="#8a12e6"/><polygon points="684.5,694.9 671.0,693.1 674.8,685.3" fill="#9b9b9b"/><polygon points="685.8,695.2 679.9,707.4 673.7,701.4" fill="#10108a"/><polygon points="670.0,697.6 678.8,687.2 683.2,694.5" fill="#8a12e6"/><polygon points="689.9,702.6 682.1,691.5 690.3,689.0" fill="#f39a10"/><polygon points="672.1,712.7 664.0,701.8 672.2,699.1" fill="#9b9b9b"/><polygon points="681.8,687.0 694.9,683.4 694.5,692.0" fill="#9b9b9b"/><polygon points="670.3,700.9 676.2,688.6 682.4,694.6" fill="#9b9b9b"/><polygon points="692.9,701.8 680.0,705.9 680.1,697.3" fill="#10108a"/><polygon points="696.3,696.9 682.7,696.5 685.7,688.4" fill="#9b9b9b"/><polygon points="695.1,698.1 682.0,701.9 682.3,693.3" fill="#8a12e6"/><polygon points="671.8,695.4 684.5,700.2 679.1,706.9" fill="#1a8fd4"/><polygon points="676.6,684.7 684.1,696.1 675.8,698.3" fill="#10108a"/><polygon points="686.3,698.4 674.2,692.3 680.3,686.2" fill="#1a8fd4"/><polygon points="667.9,695.4 674.6,707.3 666.1,708.9" fill="#f39a10"/><polygon points="688.2,705.1 676.5,698.2 682.9,692.5" fill="#9b9b9b"/><polygon points="692.6,715.5 698.6,727.7 690.1,728.9" fill="#f39a10"/><polygon points="703.7,736.3 690.3,733.9 694.4,726.3" fill="#f39a10"/><polygon points="692.0,711.4 680.1,704.9 686.3,699.0" fill="#9b9b9b"/><polygon points="683.2,718.1 678.4,730.8 671.7,725.4" fill="#f39a10"/><polygon points="691.0,723.7 702.0,715.7 704.6,723.9" fill="#9b9b9b"/><polygon points="703.5,719.9 694.7,709.5 702.7,706.3" fill="#f39a10"/><polygon points="689.5,718.8 702.5,714.7 702.4,723.3" fill="#19e619"/><polygon points="689.3,695.5 690.2,709.1 681.9,706.9" fill="#19e619"/><polygon points="711.0,728.3 697.7,725.8 701.8,718.3" fill="#19e619"/><polygon points="688.8,723.7 690.5,710.2 698.2,713.9" fill="#f39a10"/><polygon points="691.7,696.4 688.6,709.6 681.3,705.1" fill="#9b9b9b"/><polygon points="689.1,730.9 700.6,723.6 702.7,731.9" fill="#f39a10"/><polygon points="693.6,725.9 693.6,712.3 701.7,715.0" fill="#f39a10"/><polygon points="694.9,724.7 708.5,726.1 705.0,733.9" fill="#1a8fd4"/><polygon points="702.8,736.9 689.3,735.3 692.9,727.5" fill="#f39a10"/><polygon points="702.9,706.5 689.5,708.7 690.8,700.2" fill="#19e619"/><polygon points="696.8,716.8 685.0,710.1 691.4,704.3" fill="#1a8fd4"/><polygon points="689.0,728.9 698.9,719.6 702.5,727.4" fill="#1a8fd4"/><polygon points="694.8,702.2 707.2,707.7 701.5,714.0" fill="#f39a10"/><polygon points="709.2,724.4 702.7,736.3 696.8,729.9" fill="#f39a10"/><polygon points="683.6,705.5 692.9,715.5 685.0,719.0" fill="#1a8fd4"/><polygon points="704.3,722.9 693.4,730.9 690.8,722.7" fill="#1a8fd4"/><polygon points="689.2,739.4 698.1,729.1 702.5,736.5" fill="#19e619"/><polygon points="703.9,719.6 705.3,733.2 696.9,731.3" fill="#1a8fd4"/><polygon points="698.8,711.4 685.2,712.2 687.5,703.9" fill="#9b9b9b"/><polygon points="706.8,732.4 696.1,724.1 703.2,719.3" fill="#9b9b9b"/><polygon points="682.6,724.4 694.6,730.7 688.4,736.7" fill="#f39a10"/><polygon points="684.0,706.5 677.0,718.2 671.4,711.7" fill="#f39a10"/><polygon points="712.0,729.0 702.1,738.3 698.5,730.6" fill="#9b9b9b"/><polygon points="693.1,736.3 681.2,742.9 679.6,734.4" fill="#9b9b9b"/><polygon points="685.9,726.1 699.5,726.1 696.7,734.3" fill="#1a8fd4"/><polygon points="705.0,726.2 702.1,713.0 710.6,713.9" fill="#f39a10"/><polygon points="702.6,713.7 716.1,712.3 714.2,720.7" fill="#f39a10"/><polygon points="682.3,740.1 693.5,732.4 695.8,740.7" fill="#1a8fd4"/><polygon points="708.0,708.2 699.7,719.0 694.9,711.9" fill="#1a8fd4"/><polygon points="694.4,707.1 680.8,707.8 683.1,699.5" fill="#9b9b9b"/><polygon points="682.5,713.4 693.8,705.8 696.0,714.1" fill="#1a8fd4"/><polygon points="690.1,723.7 703.3,727.1 698.6,734.3" fill="#19e619"/><polygon points="699.9,709.5 688.5,702.2 695.1,696.8" fill="#f39a10"/><polygon points="673.5,713.5 681.8,702.7 686.6,709.8" fill="#f39a10"/><polygon points="709.0,731.9 702.0,720.3 710.3,718.4" fill="#f39a10"/><polygon points="688.7,722.7 689.8,736.3 681.4,734.2" fill="#f39a10"/><polygon points="698.8,702.7 703.5,715.5 694.9,715.7" fill="#f39a10"/><polygon points="694.1,729.4 697.0,742.7 688.4,741.7" fill="#1a8fd4"/><polygon points="705.3,727.5 694.3,735.5 691.7,727.3" fill="#f39a10"/><polygon points="696.7,711.4 685.7,719.4 683.1,711.2" fill="#f39a10"/><polygon points="704.5,722.5 706.9,709.1 714.5,713.2" fill="#f39a10"/><polygon points="696.4,718.3 683.3,714.7 688.1,707.5" fill="#f39a10"/><polygon points="700.9,728.8 701.0,742.4 692.8,739.8" fill="#1a8fd4"/><polygon points="695.4,713.5 685.7,723.0 681.9,715.2" fill="#1a8fd4"/><polygon points="694.5,726.6 708.1,727.3 704.9,735.3" fill="#1a8fd4"/><polygon points="677.6,728.5 691.1,727.3 689.1,735.7" fill="#f39a10"/><polygon points="703.7,714.6 705.0,728.1 696.7,726.2" fill="#9b9b9b"/><polygon points="684.7,715.3 674.4,706.3 681.8,702.0" fill="#f39a10"/><polygon points="700.7,737.8 688.5,731.7 694.6,725.6" fill="#f39a10"/><polygon points="707.8,728.3 694.4,725.7 698.7,718.2" fill="#f39a10"/><polygon points="711.5,733.3 697.9,733.2 700.7,725.0" fill="#9b9b9b"/><polygon points="696.8,715.3 692.1,702.5 700.7,702.3" fill="#f39a10"/><polygon points="708.3,723.1 694.8,721.1 698.7,713.4" fill="#f39a10"/><polygon points="695.6,716.8 683.2,711.3 688.9,704.9" fill="#1a8fd4"/><polygon points="687.5,716.6 687.8,703.0 695.9,705.9" fill="#1a8fd4"/><polygon points="712.7,742.3 708.6,729.3 717.2,729.4" fill="#19e619"/><polygon points="697.0,729.2 692.5,742.0 685.7,736.7" fill="#f39a10"/><polygon points="683.8,705.2 694.1,696.4 697.4,704.3" fill="#f39a10"/><polygon points="686.8,713.4 678.6,724.3 673.8,717.2" fill="#f39a10"/><polygon points="704.4,700.0 699.5,712.7 692.8,707.2" fill="#19e619"/><polygon points="703.3,714.9 700.5,728.2 693.1,723.9" fill="#f39a10"/><polygon points="691.8,723.7 703.2,716.3 705.3,724.7" fill="#19e619"/><polygon points="701.1,691.0 699.2,704.5 691.5,700.7" fill="#f39a10"/><polygon points="691.3,707.2 704.8,708.4 701.4,716.3" fill="#f39a10"/><polygon points="693.0,717.5 696.4,704.3 703.6,709.0" fill="#9b9b9b"/><polygon points="685.2,706.1 686.8,719.6 678.3,717.8" fill="#1a8fd4"/><polygon points="710.6,726.9 723.0,721.3 723.8,729.8" fill="#f39a10"/><polygon points="710.5,722.7 699.4,730.5 696.9,722.3" fill="#f39a10"/><polygon points="699.8,735.4 711.1,728.0 713.3,736.3" fill="#1a8fd4"/><polygon points="703.3,701.6 698.8,688.8 707.4,688.6" fill="#f39a10"/><polygon points="692.2,729.3 705.1,725.2 705.0,733.8" fill="#f39a10"/><polygon points="694.9,721.7 708.4,720.5 706.4,728.8" fill="#1a8fd4"/><polygon points="694.7,705.2 697.3,691.9 704.8,696.2" fill="#1a8fd4"/><polygon points="690.0,728.4 683.1,740.2 677.5,733.7" fill="#9b9b9b"/><polygon points="696.2,724.9 707.0,733.2 699.9,738.0" fill="#1a8fd4"/><polygon points="709.9,733.5 700.9,723.4 708.8,720.0" fill="#f39a10"/><polygon points="693.0,736.2 679.4,736.4 682.0,728.2" fill="#19e619"/><polygon points="682.9,733.5 681.4,747.0 673.6,743.5" fill="#f39a10"/><polygon points="687.6,730.4 700.6,726.2 700.5,734.8" fill="#1a8fd4"/><polygon points="708.0,731.2 695.5,736.6 694.8,728.0" fill="#19e619"/><polygon points="713.7,722.4 702.2,715.1 708.9,709.7" fill="#f39a10"/><polygon points="696.3,725.5 709.8,727.6 705.8,735.2" fill="#1a8fd4"/><polygon points="692.3,721.9 680.1,727.9 678.9,719.4" fill="#f39a10"/><polygon points="694.7,722.8 708.3,722.1 706.0,730.4" fill="#1a8fd4"/><polygon points="551.7,147.4 549.7,133.9 558.2,135.4" fill="#1a8fd4"/><polygon points="559.6,136.0 559.2,149.5 551.1,146.6" fill="#9b9b9b"/><polygon points="592.2,133.5 602.4,142.5 595.0,146.8" fill="#1a8fd4"/><polygon points="605.4,141.0 605.8,127.5 613.9,130.4" fill="#f39a10"/><polygon points="629.6,139.0 621.1,128.4 629.2,125.5" fill="#f39a10"/><polygon points="685.0,140.5 689.3,153.4 680.7,153.4" fill="#1a8fd4"/><polygon points="617.5,153.2 630.8,156.0 626.5,163.4" fill="#1a8fd4"/><polygon points="653.2,154.3 664.8,161.4 658.2,166.9" fill="#1a8fd4"/><polygon points="743.0,156.5 747.3,169.4 738.7,169.4" fill="#1a8fd4"/><polygon points="650.0,189.5 645.7,176.6 654.3,176.6" fill="#f39a10"/><path d="M655.7 183.8L644.3 180.2" stroke="#000" stroke-width="1.3"/><polygon points="679.0,192.6 665.5,192.2 668.4,184.1" fill="#ee1c25"/><polygon points="614.4,196.0 614.8,182.5 622.9,185.4" fill="#9b9b9b"/><polygon points="619.0,192.4 632.5,192.8 629.6,200.9" fill="#f39a10"/><polygon points="640.2,188.5 650.4,197.5 643.0,201.8" fill="#1a8fd4"/><polygon points="612.4,198.0 620.9,208.6 612.8,211.5" fill="#9b9b9b"/><polygon points="694.0,228.4 683.4,236.9 680.5,228.8" fill="#9b9b9b"/><polygon points="688.4,233.0 696.9,243.6 688.8,246.5" fill="#1a8fd4"/><polygon points="722.3,228.5 727.8,241.0 719.2,241.8" fill="#1a8fd4"/><polygon points="690.0,266.5 685.7,253.6 694.3,253.6" fill="#1b7a4a"/><polygon points="694.2,260.3 705.8,267.4 699.2,272.9" fill="#f39a10"/><path d="M693.5 268.3L704.5 263.7" stroke="#000" stroke-width="1.3"/><polygon points="681.4,261.0 689.9,271.6 681.8,274.5" fill="#1a8fd4"/><polygon points="687.3,286.4 680.8,274.4 689.3,272.9" fill="#f39a10"/><polygon points="725.3,291.5 722.2,278.2 730.8,279.0" fill="#1a8fd4"/><polygon points="702.0,296.5 697.7,283.6 706.3,283.6" fill="#f39a10"/><path d="M707.7 290.8L696.3 287.2" stroke="#000" stroke-width="1.3"/><polygon points="687.3,298.4 680.8,286.4 689.3,284.9" fill="#f39a10"/><polygon points="698.4,296.0 698.8,282.5 706.9,285.4" fill="#f39a10"/><path d="M705.8 292.6L696.2 285.4" stroke="#000" stroke-width="1.3"/><polygon points="723.7,295.4 721.7,281.9 730.2,283.4" fill="#1a8fd4"/><polygon points="707.6,314.0 699.1,303.4 707.2,300.5" fill="#1a8fd4"/><polygon points="722.3,317.4 715.8,305.4 724.3,303.9" fill="#1a8fd4"/><polygon points="682.0,308.5 686.3,321.4 677.7,321.4" fill="#1a8fd4"/><polygon points="699.8,333.5 689.6,324.5 697.0,320.2" fill="#f39a10"/><polygon points="693.7,333.6 700.2,345.6 691.7,347.1" fill="#1a8fd4"/><polygon points="723.7,350.4 721.7,336.9 730.2,338.4" fill="#1a8fd4"/><polygon points="722.7,349.2 715.6,360.8 710.1,354.2" fill="#9b9b9b"/><polygon points="722.8,345.5 720.0,358.8 712.6,354.5" fill="#9b9b9b"/><polygon points="833.4,368.0 833.8,354.5 841.9,357.4" fill="#1a8fd4"/><path d="M840.8 364.6L831.2 357.4" stroke="#000" stroke-width="1.3"/><polygon points="717.2,371.5 727.4,380.5 720.0,384.8" fill="#f39a10"/><polygon points="744.4,375.3 730.9,377.3 732.4,368.8" fill="#f39a10"/><polygon points="755.7,381.4 753.7,367.9 762.2,369.4" fill="#ee1c25"/><polygon points="733.8,381.3 728.8,393.9 722.2,388.4" fill="#f39a10"/><polygon points="724.5,390.2 715.5,400.4 711.2,393.0" fill="#f39a10"/><polygon points="699.8,389.3 694.8,401.9 688.2,396.4" fill="#f39a10"/><polygon points="759.0,380.5 763.3,393.4 754.7,393.4" fill="#1a8fd4"/><polygon points="782.0,398.5 786.3,411.4 777.7,411.4" fill="#ee1c25"/><polygon points="705.0,413.6 715.6,405.1 718.5,413.2" fill="#f39a10"/><polygon points="734.3,426.4 727.8,414.4 736.3,412.9" fill="#1a8fd4"/><polygon points="742.7,410.6 749.2,422.6 740.7,424.1" fill="#f39a10"/><polygon points="690.7,418.4 688.7,404.9 697.2,406.4" fill="#1a8fd4"/><polygon points="714.4,435.0 714.8,421.5 722.9,424.4" fill="#ee1c25"/><polygon points="748.7,428.6 755.2,440.6 746.7,442.1" fill="#f39a10"/><path d="M744.0 435.2L756.0 436.8" stroke="#000" stroke-width="1.3"/><polygon points="760.3,459.5 757.2,446.2 765.8,447.0" fill="#1a8fd4"/><polygon points="817.0,454.5 821.3,467.4 812.7,467.4" fill="#1a8fd4"/><polygon points="823.3,458.5 828.8,471.0 820.2,471.8" fill="#1a8fd4"/><polygon points="746.0,479.5 741.7,466.6 750.3,466.6" fill="#1a8fd4"/><polygon points="726.3,473.5 731.8,486.0 723.2,486.8" fill="#1a8fd4"/><polygon points="744.7,512.4 742.7,498.9 751.2,500.4" fill="#1a8fd4"/><polygon points="687.2,502.5 697.4,511.5 690.0,515.8" fill="#f39a10"/><path d="M685.1 510.3L696.9 507.7" stroke="#000" stroke-width="1.3"/><polygon points="695.4,521.0 695.8,507.5 703.9,510.4" fill="#f39a10"/><path d="M702.8 517.6L693.2 510.4" stroke="#000" stroke-width="1.3"/><polygon points="710.3,521.4 703.8,509.4 712.3,507.9" fill="#1a8fd4"/><polygon points="716.0,505.5 720.3,518.4 711.7,518.4" fill="#1a8fd4"/><polygon points="714.0,527.5 709.7,514.6 718.3,514.6" fill="#1a8fd4"/><polygon points="727.3,521.5 732.8,534.0 724.2,534.8" fill="#1a8fd4"/><polygon points="781.0,564.5 776.7,551.6 785.3,551.6" fill="#1a8fd4"/><polygon points="955.8,585.3 950.8,597.9 944.2,592.4" fill="#1a8fd4"/><polygon points="717.4,628.0 717.8,614.5 725.9,617.4" fill="#f39a10"/><polygon points="680.5,626.2 693.8,629.0 689.5,636.4" fill="#f39a10"/><polygon points="731.3,641.6 733.3,655.1 724.8,653.6" fill="#1a8fd4"/><polygon points="740.7,671.4 738.7,657.9 747.2,659.4" fill="#10108a"/><polygon points="740.8,662.5 738.0,675.8 730.6,671.5" fill="#1a8fd4"/><polygon points="750.0,665.5 754.3,678.4 745.7,678.4" fill="#1a8fd4"/><polygon points="757.7,686.4 755.7,672.9 764.2,674.4" fill="#1a8fd4"/><polygon points="745.3,710.6 747.3,724.1 738.8,722.6" fill="#1a8fd4"/><polygon points="712.0,720.5 716.3,733.4 707.7,733.4" fill="#1a8fd4"/><polygon points="703.5,465.5 703.5,476.5 722,470.6" fill="#ff1a1a" stroke="none"/>
</g>
<g transform="translate(644 216.5) rotate(45)"><rect x="-3.6" y="-3.6" width="7.2" height="7.2" fill="#ffd0d8" stroke="#ff6f8a" stroke-width="1"/><circle r="1.3" fill="#ff2a4a"/></g>
<g transform="translate(656 235) rotate(45)"><rect x="-3.6" y="-3.6" width="7.2" height="7.2" fill="#ffd0d8" stroke="#ff6f8a" stroke-width="1"/><circle r="1.3" fill="#ff2a4a"/></g>
<g transform="translate(663.5 235) rotate(45)"><rect x="-3.6" y="-3.6" width="7.2" height="7.2" fill="#ffd0d8" stroke="#ff6f8a" stroke-width="1"/><circle r="1.3" fill="#ff2a4a"/></g>
<text x="276.5" y="725.3" font-size="10" fill="#5d6468" textLength="131" lengthAdjust="spacingAndGlyphs">13° 22′ 24″ N 110° 14′ 22″ E</text>
<rect x="5.5" y="133.5" width="18" height="33" rx="3" fill="#fff" fill-opacity=".4"/>
<rect x="7.3" y="135" width="14.4" height="14" rx="1.5" fill="#003c88" fill-opacity=".5"/><rect x="7.3" y="150.3" width="14.4" height="14.2" rx="1.5" fill="#003c88" fill-opacity=".5"/>
<path d="M11.6 142.2 H17.4 M14.5 139.3 V145.1 M12.3 157.8 H16.7" stroke="#fff" stroke-width="1.5"/>
<rect x="6" y="716" width="69" height="14.5" rx="2" fill="#003c88" fill-opacity=".3"/>
<path d="M8.2 718.5 V728.8 H72.8 V718.5" fill="none" stroke="#eef2f6" stroke-width="1.2"/>
<text x="40.5" y="727.2" font-size="8.2" fill="#e8eef4" text-anchor="middle">50 km</text>
<circle cx="1110" cy="457.2" r="3.6" fill="#f4c430"/>
<rect x="624.2" y="429.3" width="119.2" height="36" rx="2.5" fill="#f3cf45" fill-opacity=".7"/>
<text x="630" y="443.6" font-size="10.7" fill="#5b9fd6" textLength="107.6" lengthAdjust="spacingAndGlyphs">339.37 km(183.25 nm)</text><text x="630" y="458.4" font-size="10.7" fill="#5b9fd6">Giám sát</text>
<rect x="1003.5" y="430.4" width="214" height="21.4" rx="2.5" fill="#f3cf45" fill-opacity=".7" stroke="#f6dc6e" stroke-opacity=".6" stroke-width="1"/>
<path d="M1106.5 451.8 L1110 455 L1113.5 451.8 Z" fill="#f3cf45" fill-opacity=".7"/>
<text x="1010" y="444.8" font-size="10.6" fill="#5b9fd6" textLength="201" lengthAdjust="spacingAndGlyphs">QNg 90459 TS lúc 09h06 ngày 27/10/2025</text>
</svg>

</div>
<div id="popup">
  <div class="ph"><svg width="24" height="16" viewBox="0 0 24 16" class="flag"><rect width="24" height="16" rx="1" fill="#da251d"/><path d="M12 3.2 L13.2 6.6 L16.8 6.6 L13.9 8.8 L15 12.2 L12 10.1 L9 12.2 L10.1 8.8 L7.2 6.6 L10.8 6.6 Z" fill="#ffeb3b"/></svg><b>SAR 631</b></div>
  <div class="r" style="top:43px">MMSI: <b>574006130</b></div>
  <div class="r" style="top:62px">Callsign/IMO:<b>3WWZ7/1014917</b></div>
  <div class="r" style="top:81px">National: <b>Viet Nam</b></div>
  <div class="r" style="top:99px">Type of ship:<b>Search and Rescue</b></div>
  <div class="r" style="top:118px">Dimension:<b>63x10 m</b></div>
  <div class="r" style="top:144px">Status:<b>Under way using engine</b></div>
  <div class="r" style="top:163px">Draught:<b>3.3 m</b></div>
  <div class="r" style="top:189px">S.O.G:<b>16.6 knots</b></div>
  <div class="r c2" style="top:189px">C.O.G:<b>88°</b></div>
  <div class="r" style="top:208px">Heading:<b>78°</b></div>
  <div class="r c2" style="top:208px">R.O.T:<b>Not turning</b></div>
  <div class="r" style="top:227px">Position: <b>13°45'04N / 109°28'55E</b></div>
  <div class="r" style="top:246px">Time of position: <b>10:23:40 27/10/2025 (14 secs ago)</b></div>
  <div class="r" style="top:264px">Class:<b>A</b></div>
  <div class="r c2" style="top:264px"><b>Station: BDR</b></div>
  <div class="btn" style="left:4px;top:291px;width:31.5px">1H</div>
  <div class="btn" style="left:35.5px;top:291px;width:33px">3H</div>
  <div class="btn" style="left:68.5px;top:291px;width:33.5px">6H</div>
  <div class="btn" style="left:102px;top:291px;width:38px">12H</div>
  <div class="btn" style="left:140px;top:291px;width:38px">24H</div>
  <div class="btn" style="left:178px;top:291px;width:29px">...</div>
  <div class="btn" style="left:207px;top:291px;width:38px">ETA</div>
  <div class="btn red" style="left:245px;top:291px;width:35px"><svg width="9" height="10" viewBox="0 0 9 10"><path d="M0.3 1.3 H3 V0.4 H6 V1.3 H8.7 V2.4 H0.3 Z M1 3 H8 L7.5 9.2 Q7.4 9.8 6.8 9.8 H2.2 Q1.6 9.8 1.5 9.2 Z" fill="#fff"/></svg></div>
  <div class="btn pink" style="left:3px;top:316px;width:75px">BỎ THEO DÕI</div>
  <div class="btn" style="left:78px;top:316px;width:60px">THỜI TIẾT</div>
  <div class="btn" style="left:138px;top:316px;width:48px">THOÁT</div>
</div>

<div id="status">
  <div class="wline"></div>
  <div class="lightblue"></div>
  <svg class="abs" style="left:11px;top:6px" width="13" height="12" viewBox="0 0 13 12"><path d="M5 0.5 H8 V2 H10 V5 L11.5 5.8 L10 9.5 H3 L1.5 5.8 L3 5 V2 H5 Z" fill="#fff"/><path d="M0.5 10.5 Q2 11.8 3.5 10.5 Q5 11.8 6.5 10.5 Q8 11.8 9.5 10.5 Q11 11.8 12.5 10.5" fill="none" stroke="#fff" stroke-width="1"/><rect x="4.3" y="3.2" width="1.3" height="1.3" fill="#253777"/><rect x="7.4" y="3.2" width="1.3" height="1.3" fill="#253777"/></svg>
  <span class="sl" style="left:24px;top:3px">Đang hiển thị:</span><span class="sl" style="left:148px;top:3px">1432</span>
  <svg class="abs" style="left:10px;top:23px" width="15" height="12" viewBox="0 0 15 12"><path d="M7.5 2.5 L4.2 11.5 H5.8 L7.5 6.5 L9.2 11.5 H10.8 Z" fill="#fff"/><circle cx="7.5" cy="3" r="1.4" fill="#fff"/><path d="M3.8 0.8 Q2.2 3 3.8 5.4 M1.8 0 Q-0.6 3 1.8 6.2 M11.2 0.8 Q12.8 3 11.2 5.4 M13.2 0 Q15.6 3 13.2 6.2" fill="none" stroke="#fff" stroke-width="1.1"/></svg>
  <span class="sl" style="left:24px;top:20px">Tàu online:</span><span class="sl" style="left:148px;top:20px">8011</span>
  <svg class="abs" style="left:308px;top:6px" width="11" height="12" viewBox="0 0 11 12"><circle cx="5.5" cy="3.3" r="3" fill="#fff"/><path d="M0.3 11.5 Q0.3 6.8 5.5 6.8 Q10.7 6.8 10.7 11.5 Z" fill="#fff"/></svg>
  <span class="sl" style="left:318px;top:3px">Người dùng:</span><span class="sl" style="left:445px;top:3px">334</span>
  <svg class="abs" style="left:308px;top:23px" width="12" height="12" viewBox="0 0 12 12"><path d="M10.3 4.5 A4.6 4.6 0 0 0 2 3.6 M1.7 7.5 A4.6 4.6 0 0 0 10 8.4" fill="none" stroke="#fff" stroke-width="1.8"/><path d="M11.6 0.8 V5.2 H7.2 Z M0.4 11.2 V6.8 H4.8 Z" fill="#fff"/></svg>
  <span class="sl" style="left:318px;top:20px">Chờ cập nhật:</span><span class="sl" style="left:445px;top:20px">18 giây</span>
  <div class="fb"><svg width="13" height="10" viewBox="0 0 13 10"><rect width="13" height="10" rx="1" fill="#1b75d0"/><path d="M0.5 1 L6.5 5.6 L12.5 1" fill="none" stroke="#0c1a33" stroke-width="1.2"/></svg><span>Ý kiến đóng góp</span></div>
  <div class="badge" style="left:833px;width:104px"><svg class="abs" style="left:9px;top:5px" width="17" height="20" viewBox="0 0 17 20"><path d="M11.8 0.3 Q12 2 10.9 3.3 Q9.8 4.6 8.3 4.5 Q8.1 2.9 9.2 1.6 Q10.3 0.4 11.8 0.3 Z M14.8 6.9 Q13 8 13 10.1 Q13.1 12.5 15.4 13.5 Q14.9 15 13.9 16.4 Q12.6 18.3 11.3 18.3 Q10.6 18.3 9.7 17.9 Q8.8 17.5 8 17.5 Q7.2 17.5 6.3 17.9 Q5.4 18.3 4.8 18.3 Q3.4 18.3 1.9 16.1 Q0.3 13.6 0.3 10.9 Q0.3 8.4 1.6 6.9 Q2.8 5.4 4.7 5.4 Q5.5 5.4 6.6 5.8 Q7.7 6.2 8.1 6.2 Q8.5 6.2 9.8 5.7 Q10.9 5.3 11.8 5.4 Q13.8 5.6 14.8 6.9 Z" fill="#fff"/></svg><span class="b1">Download on the</span><span class="b2">App Store</span></div>
  <div class="badge" style="left:941px;width:106px"><svg class="abs" style="left:7px;top:6px" width="17" height="19" viewBox="0 0 17 19"><path d="M0.5 0.8 L9.2 9.5 L0.5 18.2 Z" fill="#5bc9f4"/><path d="M0.5 0.8 L11.8 7 L9.2 9.5 Z" fill="#5cd07a"/><path d="M0.5 18.2 L11.8 12 L9.2 9.5 Z" fill="#e8404a"/><path d="M11.8 7 L16.2 9.5 L11.8 12 L9.2 9.5 Z" fill="#f9c43a"/></svg><span class="g1">ANDROID APP ON</span><span class="g2">Google<em>play</em></span></div>
</div>

<div id="taskbar">
  <svg class="abs" style="left:11px;top:8px" width="14" height="14" viewBox="0 0 14 14"><path d="M0 2 L5.8 1.2 V6.6 H0 Z M6.6 1.1 L14 0 V6.6 H6.6 Z M0 7.4 H5.8 V12.8 L0 12 Z M6.6 7.4 H14 V14 L6.6 12.9 Z" fill="#fff"/></svg>
  <svg class="abs" style="left:45px;top:6px" width="18" height="18" viewBox="0 0 18 18"><circle cx="10.5" cy="7" r="5.6" fill="none" stroke="#fff" stroke-width="1.7"/><path d="M6.6 11.2 L1 17" stroke="#fff" stroke-width="1.9"/></svg>
  <svg class="abs" style="left:83px;top:9px" width="13" height="12" viewBox="0 0 13 12"><rect x="0.5" y="2.5" width="8" height="7" fill="none" stroke="#fff"/><path d="M0 0.5 H9 M0 11.5 H9 M11 0 V3 M11 4.5 V7.5 M11 9 V12" stroke="#fff"/></svg>
  <div class="tkact"></div>
  <svg class="abs" style="left:117px;top:5px" width="22" height="20" viewBox="0 0 22 20"><circle cx="9" cy="9" r="8.5" fill="#e9453a"/><path d="M9 9 L1.6 4.8 A8.5 8.5 0 0 0 4.8 16.4 Z" fill="#34a853"/><path d="M9 9 L4.8 16.4 A8.5 8.5 0 0 0 17.5 9 Z" fill="#fbbc05"/><circle cx="9" cy="9" r="4" fill="#fff"/><circle cx="9" cy="9" r="3.1" fill="#4285f4"/><circle cx="15.5" cy="14" r="5" fill="#f2a33a"/><circle cx="15.5" cy="14" r="4" fill="#2a2f86"/><path d="M15.5 10.8 L16.3 13.2 L18.7 14 L16.3 14.8 L15.5 17.2 L14.7 14.8 L12.3 14 L14.7 13.2 Z" fill="#f4d9a0"/></svg>
  <svg class="abs" style="left:154px;top:6px" width="19" height="17" viewBox="0 0 19 17"><path d="M1 2 H7 L8.5 3.5 H18 V15 H1 Z" fill="#f7c948"/><rect x="1" y="6" width="17" height="9" fill="#fcd96a"/><rect x="5.5" y="10" width="8" height="6" fill="#2f7fd6"/><rect x="7.5" y="12.5" width="4" height="3.5" fill="#fcd96a"/></svg>
  <svg class="abs" style="left:190px;top:6px" width="20" height="18" viewBox="0 0 20 18"><path d="M1 2 Q1 0.5 2.5 0.5 H8 L9.5 2 H13 Q14 2 14 3 V16 Q14 17.5 12.5 17.5 H2.5 Q1 17.5 1 16 Z" fill="#d8232a"/><circle cx="11.5" cy="10" r="7.5" fill="#e02b32"/><path d="M5.5 10 H13 M10.5 6.5 L14.2 10 L10.5 13.5" fill="none" stroke="#fff" stroke-width="2.4"/></svg>
  <svg class="abs" style="left:226px;top:5px" width="20" height="20" viewBox="0 0 20 20"><circle cx="10" cy="10" r="9.5" fill="#8bc53f"/><circle cx="10" cy="10.5" r="5" fill="none" stroke="#fff" stroke-width="2"/><path d="M10 10 L19 1.5 L14 1 Z M10 10 L19.5 6 L17 3 Z" fill="#f36f21"/><circle cx="10" cy="10.5" r="1.6" fill="#fff"/></svg>
  <svg class="abs" style="left:263px;top:5px" width="19" height="19" viewBox="0 0 19 19"><rect x="6" y="1" width="12" height="16" fill="#e8eef7" stroke="#9db4d6" stroke-width=".6"/><rect x="0.5" y="3.5" width="12" height="12" fill="#1f5bb5"/><text x="6.5" y="13.3" font-size="10.5" font-weight="bold" fill="#fff" text-anchor="middle" font-family="Liberation Sans, sans-serif">W</text></svg>
  <div class="tkul" style="left:109px;width:36px;background:#8fb8de"></div>
  <div class="tkul" style="left:149px;width:29px"></div>
  <div class="tkul" style="left:258px;width:30px"></div>
  <svg class="abs" style="left:1245px;top:9px" width="11" height="13" viewBox="0 0 11 13"><rect x="1.5" y="0.6" width="6" height="10.5" rx="1.5" fill="none" stroke="#e6eaec" stroke-width="1"/><rect x="3.3" y="4" width="2.4" height="3.2" fill="#e6eaec"/><path d="M8.5 4.5 H10.5 V8 H8.5" fill="none" stroke="#e6eaec"/><path d="M2 12.4 H7" stroke="#e6eaec"/></svg>
  <svg class="abs" style="left:1262px;top:9px" width="13" height="12" viewBox="0 0 13 12"><path d="M0.8 4 H3 L6 1.2 V10.8 L3 8 H0.8 Z" fill="none" stroke="#e6eaec" stroke-width="1"/><path d="M7.8 3.8 Q9.2 6 7.8 8.2 M9.6 2.2 Q11.8 6 9.6 9.8" fill="none" stroke="#e6eaec" stroke-width="1"/></svg>
  <svg class="abs" style="left:1280px;top:9px" width="13" height="12" viewBox="0 0 13 12"><rect x="3.5" y="0.7" width="9" height="6.5" fill="none" stroke="#e6eaec"/><rect x="0.6" y="3.6" width="4" height="7.6" fill="#222b30" stroke="#e6eaec"/><path d="M6 10.8 H11 M8.5 7.4 V10.8" stroke="#e6eaec"/></svg>
  <div class="abs" style="left:1298px;top:9px;width:11px;height:12px;background:#f6d3d5;border:1px solid #e4767b;color:#d8232a;font-size:10px;font-weight:bold;line-height:12px;text-align:center">V</div>
  <span class="tkt" style="left:1317.5px;top:9.5px;font-size:8.4px">ENG</span>
  <span class="tkt" style="left:1345.5px;top:3.5px">10:24 AM</span>
  <span class="tkt" style="left:1342.5px;top:16.5px">10/27/2025</span>
  <svg class="abs" style="left:1396px;top:8px" width="18" height="17" viewBox="0 0 18 17"><path d="M0.6 0.6 H12.4 V9.6 H5 L2.4 12 V9.6 H0.6 Z" fill="#e6eaec"/><path d="M2.5 3 H10.5 M2.5 5 H10.5 M2.5 7 H8" stroke="#222b30" stroke-width=".8"/><circle cx="12.6" cy="11.4" r="4.6" fill="#222b30" stroke="#e6eaec" stroke-width=".9"/><text x="12.6" y="14.3" font-size="7.5" fill="#fff" text-anchor="middle" font-family="Liberation Sans, sans-serif">1</text></svg>
  <div class="abs" style="left:1423px;top:0;width:1px;height:30px;background:#5b666c"></div>
</div>

</div>
</body></html>
